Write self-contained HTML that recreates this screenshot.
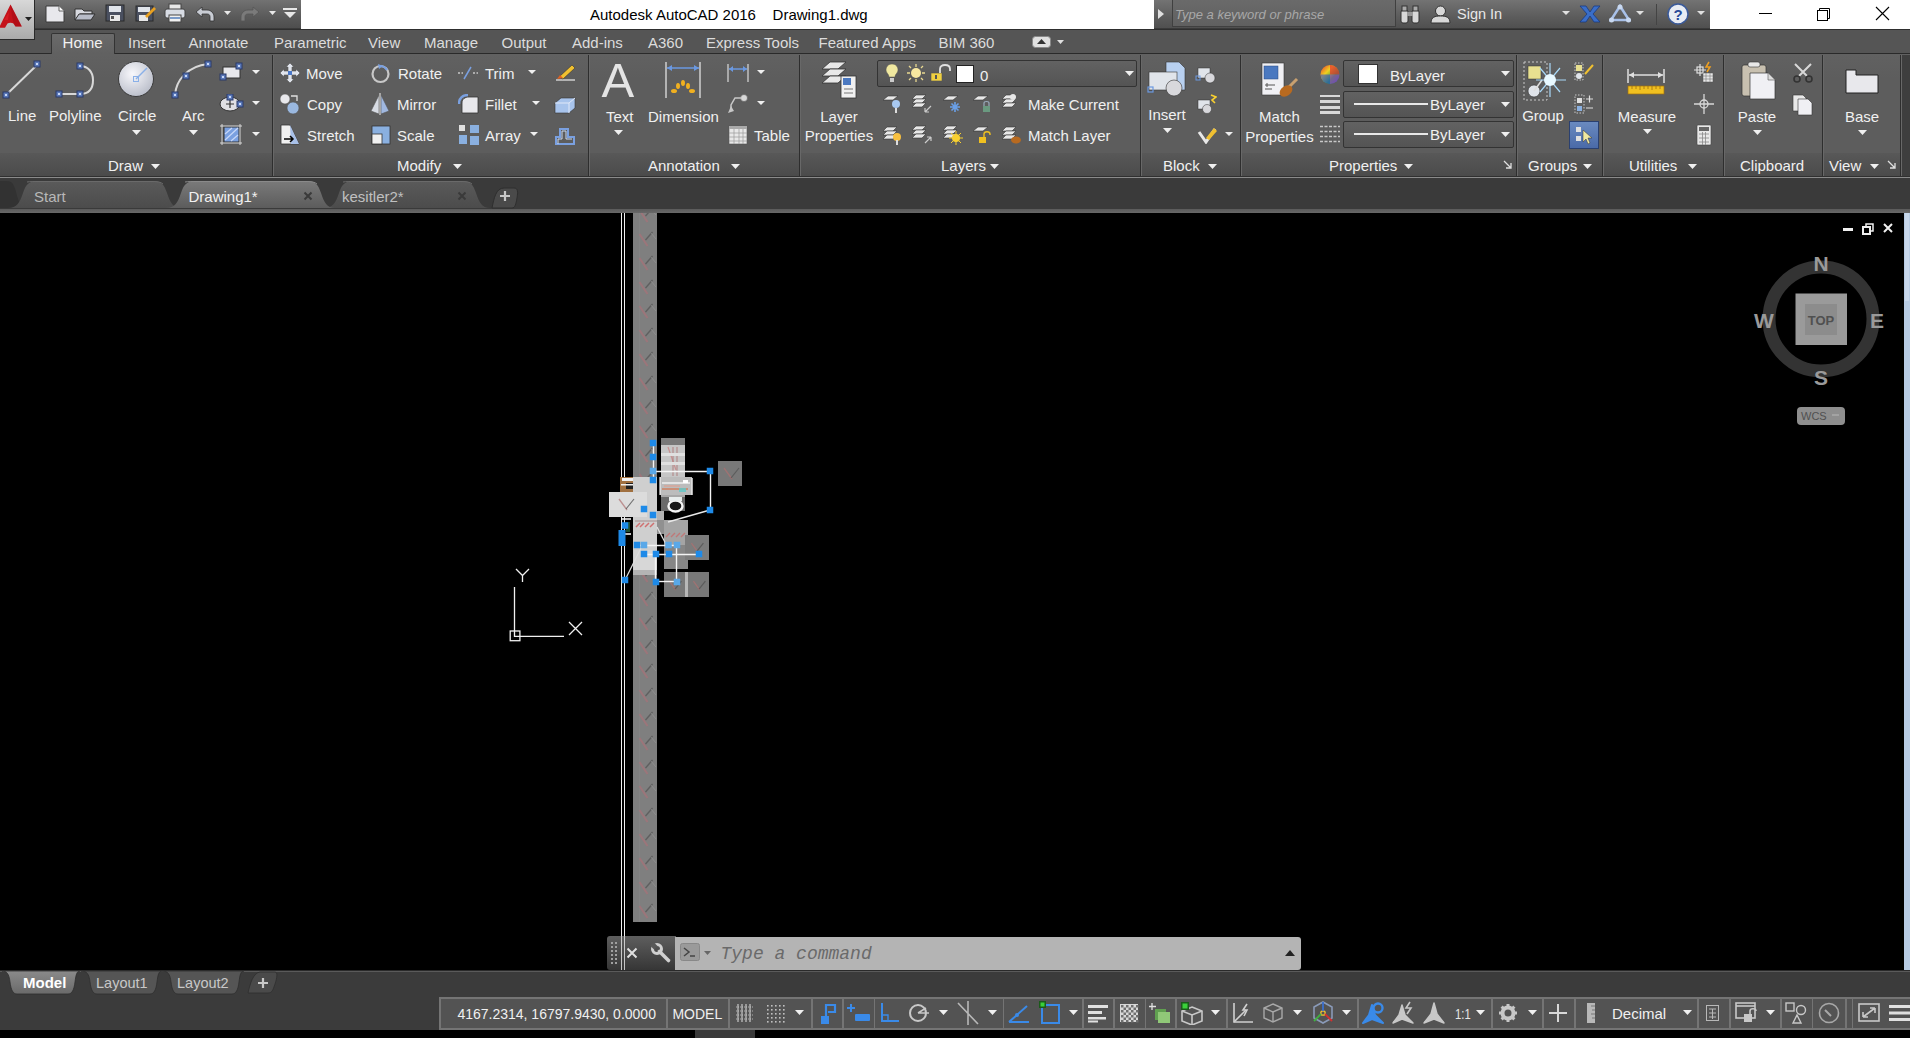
<!DOCTYPE html>
<html><head><meta charset="utf-8">
<style>
*{margin:0;padding:0;box-sizing:border-box}
html,body{width:1910px;height:1038px;overflow:hidden;background:#000;font-family:"Liberation Sans",sans-serif;position:relative}
.a{position:absolute;display:block}
.t{position:absolute;white-space:nowrap;line-height:1;font-family:"Liberation Sans",sans-serif}
</style></head><body>
<div class="a" style="left:0px;top:0px;width:1910px;height:29px;background:#ffffff"></div>
<div class="a" style="left:34px;top:0px;width:267px;height:29px;background:linear-gradient(#727272,#5a5a5a 60%,#4e4e4e);border-bottom:1px solid #3a3a3a"></div>
<svg class="a" style="left:45px;top:5px;" width="21" height="18" viewBox="0 0 21 18"><path d="M1 1H14L19 6V17H1Z" fill="#e8e8ec" stroke="#3a3a3a" stroke-width="1"/><path d="M14 1V6H19" fill="#fff" stroke="#666"/></svg>
<svg class="a" style="left:74px;top:6px;" width="22" height="15" viewBox="0 0 22 15"><path d="M1 3H8L10 5H18V8H6L1 14Z" fill="#d8dae0" stroke="#333"/><path d="M5 8H21L17 14H1Z" fill="#b8bcc8" stroke="#333"/></svg>
<svg class="a" style="left:105px;top:4px;" width="20" height="18" viewBox="0 0 20 18"><rect x="1" y="1" width="18" height="16" fill="#4a5060" stroke="#2a2a2a"/><rect x="4" y="2" width="12" height="6" fill="#e0e4ea"/><rect x="5" y="11" width="10" height="6" fill="#e8e8e8"/><rect x="6" y="12" width="3" height="3" fill="#555"/></svg>
<svg class="a" style="left:135px;top:4px;" width="22" height="18" viewBox="0 0 22 18"><rect x="1" y="2" width="17" height="15" fill="#4a5060" stroke="#2a2a2a"/><rect x="3" y="3" width="12" height="5" fill="#e0e4ea"/><rect x="4" y="11" width="9" height="6" fill="#e8e8e8"/><path d="M10 12L19 3L21 5L12 14Z" fill="#e8a020"/></svg>
<svg class="a" style="left:164px;top:3px;" width="22" height="20" viewBox="0 0 22 20"><rect x="5" y="1" width="12" height="6" fill="#e8e8e8" stroke="#444"/><rect x="1" y="6" width="20" height="9" rx="2" fill="#d8dce4" stroke="#444"/><rect x="5" y="12" width="12" height="7" fill="#f0f0f0" stroke="#444"/><rect x="6" y="14" width="10" height="2" fill="#7a9ac8"/></svg>
<svg class="a" style="left:195px;top:6px;" width="20" height="16" viewBox="0 0 20 16"><path d="M1 6L7 1V4H12C16 4 19 7 19 11V15H15V11C15 9 14 8 12 8H7V11Z" fill="#c8ccd4" stroke="#333" stroke-width=".8"/></svg>
<svg class="a" style="left:223.5px;top:11.0px;" width="7" height="4" viewBox="0 0 7 4"><path d="M0 0H7L3.5 4Z" fill="#e8e8e8"/></svg>
<svg class="a" style="left:240px;top:6px;" width="20" height="16" viewBox="0 0 20 16"><path d="M19 6L13 1V4H8C4 4 1 7 1 11V15H5V11C5 9 6 8 8 8H13V11Z" fill="#7a7a7a" stroke="#555" stroke-width=".8"/></svg>
<svg class="a" style="left:268.5px;top:11.0px;" width="7" height="4" viewBox="0 0 7 4"><path d="M0 0H7L3.5 4Z" fill="#e8e8e8"/></svg>
<svg class="a" style="left:283px;top:8px;" width="14" height="10" viewBox="0 0 14 10"><rect x="0" y="0" width="14" height="2" fill="#e8e8e8"/><path d="M1 4H13L7 10Z" fill="#e8e8e8"/></svg>
<div class="t" style="left:590px;top:7.3px;font-size:15px;color:#000000;">Autodesk AutoCAD 2016&nbsp;&nbsp;&nbsp;&nbsp;Drawing1.dwg</div>
<div class="a" style="left:1154px;top:0px;width:556px;height:29px;background:linear-gradient(#737373,#5c5c5c 60%,#505050);border-bottom:1px solid #3a3a3a"></div>
<svg class="a" style="left:1157px;top:8px;" width="8" height="12" viewBox="0 0 8 12"><path d="M1 1L7 6L1 11Z" fill="#e0e0e0"/></svg>
<div class="a" style="left:1172px;top:0px;width:224px;height:27px;background:linear-gradient(#6a6a6a,#606060);border:1px solid #404040;border-top:0"></div>
<div class="t" style="left:1175px;top:8.0px;font-size:13px;color:#a8a8a8;font-style:italic">Type a keyword or phrase</div>
<svg class="a" style="left:1400px;top:5px;" width="21" height="19" viewBox="0 0 21 19"><rect x="1" y="5" width="7" height="13" rx="2" fill="#d8d8d8" stroke="#333"/><rect x="12" y="5" width="7" height="13" rx="2" fill="#d8d8d8" stroke="#333"/><rect x="2" y="1" width="5" height="5" fill="#aaa" stroke="#333"/><rect x="13" y="1" width="5" height="5" fill="#aaa" stroke="#333"/><rect x="7" y="7" width="6" height="4" fill="#999"/></svg>
<svg class="a" style="left:1430px;top:4px;" width="21" height="20" viewBox="0 0 21 20"><circle cx="10.5" cy="7" r="5" fill="#d8d8d8" stroke="#333"/><path d="M1 19C1 13 5 12 10.5 12S20 13 20 19Z" fill="#d8d8d8" stroke="#333"/></svg>
<div class="t" style="left:1457px;top:7.1px;font-size:14.5px;color:#e8e8e8;">Sign In</div>
<svg class="a" style="left:1562.0px;top:11.0px;" width="8" height="4" viewBox="0 0 8 4"><path d="M0 0H8L4.0 4Z" fill="#e0e0e0"/></svg>
<svg class="a" style="left:1579px;top:5px;" width="22" height="18" viewBox="0 0 22 18"><path d="M1 1H7L11 7L15 1H21L14 9L21 17H15L11 11L7 17H1L8 9Z" fill="#3a6ec8" stroke="#1a3a80" stroke-width=".8"/></svg>
<svg class="a" style="left:1609px;top:4px;" width="22" height="19" viewBox="0 0 22 19"><path d="M11 2L20 16H2Z" fill="none" stroke="#a8c0e8" stroke-width="2.5"/><circle cx="11" cy="3" r="2.5" fill="#c8d8f0"/><circle cx="2.5" cy="16" r="2.5" fill="#c8d8f0"/><circle cx="19.5" cy="16" r="2.5" fill="#c8d8f0"/></svg>
<svg class="a" style="left:1636.0px;top:11.0px;" width="8" height="4" viewBox="0 0 8 4"><path d="M0 0H8L4.0 4Z" fill="#e0e0e0"/></svg>
<div class="a" style="left:1656px;top:4px;width:1px;height:21px;background:#444"></div>
<svg class="a" style="left:1667px;top:3px;" width="22" height="22" viewBox="0 0 22 22"><circle cx="11" cy="11" r="10" fill="#e8ecf4" stroke="#3a5a9a" stroke-width="1.5"/><text x="11" y="16.5" text-anchor="middle" font-family="Liberation Sans" font-weight="bold" font-size="15" fill="#2a4a9a">?</text></svg>
<svg class="a" style="left:1697.0px;top:11.0px;" width="8" height="4" viewBox="0 0 8 4"><path d="M0 0H8L4.0 4Z" fill="#e0e0e0"/></svg>
<div class="a" style="left:1759px;top:13px;width:13px;height:1px;background:#000"></div>
<svg class="a" style="left:1816px;top:7px;" width="15" height="15" viewBox="0 0 15 15"><rect x="1.5" y="3.5" width="10" height="10" fill="none" stroke="#000"/><path d="M3.5 3.5V1.5H13.5V11.5H11.5" fill="none" stroke="#000"/></svg>
<svg class="a" style="left:1875px;top:6px;" width="15" height="15" viewBox="0 0 15 15"><path d="M1 1L14 14M14 1L1 14" stroke="#000" stroke-width="1.1"/></svg>
<div class="a" style="left:0px;top:29px;width:1910px;height:25px;background:#555555;border-top:1px solid #2e2e2e;border-bottom:1px solid #2a2a2a"></div>
<div class="a" style="left:51px;top:33px;width:64px;height:22px;background:linear-gradient(#6a6a6a,#606060);border:1px solid #333;border-bottom:0;border-radius:2px 2px 0 0"></div>
<div class="a" style="left:34px;top:29px;width:0px;height:0px;"></div>
<div class="t" style="left:62.6px;top:34.7px;font-size:15px;color:#f2f2f2;">Home</div>
<div class="t" style="left:128px;top:34.7px;font-size:15px;color:#dcdcdc;">Insert</div>
<div class="t" style="left:188.4px;top:34.7px;font-size:15px;color:#dcdcdc;">Annotate</div>
<div class="t" style="left:274px;top:34.7px;font-size:15px;color:#dcdcdc;">Parametric</div>
<div class="t" style="left:368px;top:34.7px;font-size:15px;color:#dcdcdc;">View</div>
<div class="t" style="left:424px;top:34.7px;font-size:15px;color:#dcdcdc;">Manage</div>
<div class="t" style="left:501.5px;top:34.7px;font-size:15px;color:#dcdcdc;">Output</div>
<div class="t" style="left:572px;top:34.7px;font-size:15px;color:#dcdcdc;">Add-ins</div>
<div class="t" style="left:648px;top:34.7px;font-size:15px;color:#dcdcdc;">A360</div>
<div class="t" style="left:706px;top:34.7px;font-size:15px;color:#dcdcdc;">Express Tools</div>
<div class="t" style="left:818.5px;top:34.7px;font-size:15px;color:#dcdcdc;">Featured Apps</div>
<div class="t" style="left:938.6px;top:34.7px;font-size:15px;color:#dcdcdc;">BIM 360</div>
<svg class="a" style="left:1032px;top:36px;" width="19" height="12" viewBox="0 0 19 12"><rect x=".5" y=".5" width="18" height="11" rx="3" fill="#e0e0e0" stroke="#888"/><path d="M5 8H14L9.5 3Z" fill="#333"/></svg>
<svg class="a" style="left:1056.5px;top:40.0px;" width="7" height="4" viewBox="0 0 7 4"><path d="M0 0H7L3.5 4Z" fill="#e0e0e0"/></svg>
<div class="a" style="left:0px;top:0px;width:35px;height:40px;background:linear-gradient(#d8d8d8,#aaaaaa);border-right:1px solid #2a2a2a;border-bottom:1px solid #2a2a2a"></div>
<svg class="a" style="left:0px;top:4px;" width="24" height="26" viewBox="0 0 24 26"><path d="M10.5 0.5L21.8 22.5H15.5L13.5 19.5C12 18.5 9 18.5 7.5 19.5L5 23.8H-1Z" fill="#c4121a"/><path d="M10.5 0.5L21.8 22.5H15.5L13.5 19.5L12 12Z" fill="#a00c14" opacity=".45"/><path d="M4 16L9 8L8 16Z" fill="#f03038" opacity=".4"/></svg>
<svg class="a" style="left:25.0px;top:17.0px;" width="7" height="4" viewBox="0 0 7 4"><path d="M0 0H7L3.5 4Z" fill="#202020"/></svg>
<div class="a" style="left:0px;top:54px;width:1910px;height:123px;background:linear-gradient(#616161,#5d5d5d 20%,#5d5d5d)"></div>
<div class="a" style="left:0px;top:153px;width:1900px;height:23px;background:linear-gradient(#585858,#4b4b4b)"></div>
<div class="a" style="left:0px;top:176px;width:1910px;height:1px;background:#303030"></div>
<div class="a" style="left:0px;top:177px;width:1910px;height:1px;background:#8a8a8a"></div>
<div class="a" style="left:1900px;top:55px;width:10px;height:121px;background:#3e3e3e"></div>
<div class="a" style="left:272px;top:55px;width:1px;height:121px;background:#2e2e2e"></div>
<div class="a" style="left:273px;top:55px;width:1px;height:121px;background:#686868"></div>
<div class="a" style="left:588px;top:55px;width:1px;height:121px;background:#2e2e2e"></div>
<div class="a" style="left:589px;top:55px;width:1px;height:121px;background:#686868"></div>
<div class="a" style="left:799px;top:55px;width:1px;height:121px;background:#2e2e2e"></div>
<div class="a" style="left:800px;top:55px;width:1px;height:121px;background:#686868"></div>
<div class="a" style="left:1140px;top:55px;width:1px;height:121px;background:#2e2e2e"></div>
<div class="a" style="left:1141px;top:55px;width:1px;height:121px;background:#686868"></div>
<div class="a" style="left:1240px;top:55px;width:1px;height:121px;background:#2e2e2e"></div>
<div class="a" style="left:1241px;top:55px;width:1px;height:121px;background:#686868"></div>
<div class="a" style="left:1516px;top:55px;width:1px;height:121px;background:#2e2e2e"></div>
<div class="a" style="left:1517px;top:55px;width:1px;height:121px;background:#686868"></div>
<div class="a" style="left:1602px;top:55px;width:1px;height:121px;background:#2e2e2e"></div>
<div class="a" style="left:1603px;top:55px;width:1px;height:121px;background:#686868"></div>
<div class="a" style="left:1723px;top:55px;width:1px;height:121px;background:#2e2e2e"></div>
<div class="a" style="left:1724px;top:55px;width:1px;height:121px;background:#686868"></div>
<div class="a" style="left:1822px;top:55px;width:1px;height:121px;background:#2e2e2e"></div>
<div class="a" style="left:1823px;top:55px;width:1px;height:121px;background:#686868"></div>
<div class="a" style="left:1900px;top:55px;width:1px;height:121px;background:#2e2e2e"></div>
<div class="a" style="left:1901px;top:55px;width:1px;height:121px;background:#686868"></div>
<div class="t" style="left:108px;top:158.1px;font-size:15px;color:#f0f0f0;">Draw</div>
<svg class="a" style="left:150.5px;top:163.5px;" width="9" height="5" viewBox="0 0 9 5"><path d="M0 0H9L4.5 5Z" fill="#f0f0f0"/></svg>
<div class="t" style="left:397px;top:158.1px;font-size:15px;color:#f0f0f0;">Modify</div>
<svg class="a" style="left:452.5px;top:163.5px;" width="9" height="5" viewBox="0 0 9 5"><path d="M0 0H9L4.5 5Z" fill="#f0f0f0"/></svg>
<div class="t" style="left:648px;top:158.1px;font-size:15px;color:#f0f0f0;">Annotation</div>
<svg class="a" style="left:730.5px;top:163.5px;" width="9" height="5" viewBox="0 0 9 5"><path d="M0 0H9L4.5 5Z" fill="#f0f0f0"/></svg>
<div class="t" style="left:941px;top:158.1px;font-size:15px;color:#f0f0f0;">Layers</div>
<svg class="a" style="left:989.5px;top:163.5px;" width="9" height="5" viewBox="0 0 9 5"><path d="M0 0H9L4.5 5Z" fill="#f0f0f0"/></svg>
<div class="t" style="left:1163px;top:158.1px;font-size:15px;color:#f0f0f0;">Block</div>
<svg class="a" style="left:1207.5px;top:163.5px;" width="9" height="5" viewBox="0 0 9 5"><path d="M0 0H9L4.5 5Z" fill="#f0f0f0"/></svg>
<div class="t" style="left:1329px;top:158.1px;font-size:15px;color:#f0f0f0;">Properties</div>
<svg class="a" style="left:1403.5px;top:163.5px;" width="9" height="5" viewBox="0 0 9 5"><path d="M0 0H9L4.5 5Z" fill="#f0f0f0"/></svg>
<svg class="a" style="left:1503px;top:160px;" width="10" height="10" viewBox="0 0 10 10"><path d="M1 1L8 8M8 3V8H3" stroke="#e0e0e0" stroke-width="1.3" fill="none"/></svg>
<div class="t" style="left:1528px;top:158.1px;font-size:15px;color:#f0f0f0;">Groups</div>
<svg class="a" style="left:1582.5px;top:163.5px;" width="9" height="5" viewBox="0 0 9 5"><path d="M0 0H9L4.5 5Z" fill="#f0f0f0"/></svg>
<div class="t" style="left:1629px;top:158.1px;font-size:15px;color:#f0f0f0;">Utilities</div>
<svg class="a" style="left:1687.5px;top:163.5px;" width="9" height="5" viewBox="0 0 9 5"><path d="M0 0H9L4.5 5Z" fill="#f0f0f0"/></svg>
<div class="t" style="left:1740px;top:158.1px;font-size:15px;color:#f0f0f0;">Clipboard</div>
<div class="t" style="left:1829px;top:158.1px;font-size:15px;color:#f0f0f0;">View</div>
<svg class="a" style="left:1869.5px;top:163.5px;" width="9" height="5" viewBox="0 0 9 5"><path d="M0 0H9L4.5 5Z" fill="#f0f0f0"/></svg>
<svg class="a" style="left:1887px;top:160px;" width="10" height="10" viewBox="0 0 10 10"><path d="M1 1L8 8M8 3V8H3" stroke="#e0e0e0" stroke-width="1.3" fill="none"/></svg>
<svg class="a" style="left:0px;top:58px;" width="44" height="42" viewBox="0 0 44 42"><path d="M6 37L38 6" stroke="#d8d8d8" stroke-width="2"/><rect x="3" y="34" width="6" height="6" fill="#5a78b8" stroke="#2a3a6a" stroke-width="1"/><rect x="5" y="36" width="2" height="2" fill="#c8d8f8"/><rect x="34" y="3" width="6" height="6" fill="#5a78b8" stroke="#2a3a6a" stroke-width="1"/><rect x="36" y="5" width="2" height="2" fill="#c8d8f8"/></svg>
<div class="t" style="left:8px;top:108.3px;font-size:15px;color:#f0f0f0;">Line</div>
<svg class="a" style="left:52px;top:62px;" width="46" height="36" viewBox="0 0 46 36"><path d="M7 32H28C38 32 41 26 41 18C41 10 36 4 28 4" fill="none" stroke="#d8d8d8" stroke-width="2"/><rect x="4" y="29" width="6" height="6" fill="#5a78b8" stroke="#2a3a6a" stroke-width="1"/><rect x="6" y="31" width="2" height="2" fill="#c8d8f8"/><rect x="25" y="29" width="6" height="6" fill="#5a78b8" stroke="#2a3a6a" stroke-width="1"/><rect x="27" y="31" width="2" height="2" fill="#c8d8f8"/><rect x="25" y="1" width="6" height="6" fill="#5a78b8" stroke="#2a3a6a" stroke-width="1"/><rect x="27" y="3" width="2" height="2" fill="#c8d8f8"/></svg>
<div class="t" style="left:49px;top:108.3px;font-size:15px;color:#f0f0f0;">Polyline</div>
<svg class="a" style="left:116px;top:60px;" width="40" height="40" viewBox="0 0 40 40"><defs><radialGradient id="cg" cx="40%" cy="35%" r="70%"><stop offset="0" stop-color="#f8f8fc"/><stop offset="1" stop-color="#b8bcc8"/></radialGradient></defs><circle cx="20" cy="19" r="17.5" fill="url(#cg)" stroke="#3a3a3a" stroke-width="1"/><path d="M20 19L31 8" stroke="#8ab0e8" stroke-width="1.5"/><rect x="17.5" y="16.5" width="5" height="5" fill="none" stroke="#8ab0e8"/></svg>
<div class="t" style="left:118px;top:108.3px;font-size:15px;color:#f0f0f0;">Circle</div>
<svg class="a" style="left:131.5px;top:129.5px;" width="9" height="5" viewBox="0 0 9 5"><path d="M0 0H9L4.5 5Z" fill="#f0f0f0"/></svg>
<svg class="a" style="left:170px;top:60px;" width="44" height="40" viewBox="0 0 44 40"><path d="M5 35C6 20 18 6 38 4" fill="none" stroke="#d8d8d8" stroke-width="2"/><rect x="2" y="32" width="6" height="6" fill="#5a78b8" stroke="#2a3a6a" stroke-width="1"/><rect x="4" y="34" width="2" height="2" fill="#c8d8f8"/><rect x="13" y="13" width="6" height="6" fill="#5a78b8" stroke="#2a3a6a" stroke-width="1"/><rect x="15" y="15" width="2" height="2" fill="#c8d8f8"/><rect x="35" y="1" width="6" height="6" fill="#5a78b8" stroke="#2a3a6a" stroke-width="1"/><rect x="37" y="3" width="2" height="2" fill="#c8d8f8"/></svg>
<div class="t" style="left:182px;top:108.3px;font-size:15px;color:#f0f0f0;">Arc</div>
<svg class="a" style="left:188.5px;top:129.5px;" width="9" height="5" viewBox="0 0 9 5"><path d="M0 0H9L4.5 5Z" fill="#f0f0f0"/></svg>
<svg class="a" style="left:218px;top:62px;" width="26" height="20" viewBox="0 0 26 20"><rect x="5" y="5" width="17" height="11" fill="#e8e8ec" stroke="#333"/><rect x="2" y="12" width="6" height="6" fill="#5a78b8" stroke="#2a3a6a" stroke-width="1"/><rect x="4" y="14" width="2" height="2" fill="#c8d8f8"/><rect x="18" y="1" width="6" height="6" fill="#5a78b8" stroke="#2a3a6a" stroke-width="1"/><rect x="20" y="3" width="2" height="2" fill="#c8d8f8"/></svg>
<svg class="a" style="left:252.0px;top:70.0px;" width="8" height="4" viewBox="0 0 8 4"><path d="M0 0H8L4.0 4Z" fill="#f0f0f0"/></svg>
<svg class="a" style="left:219px;top:94px;" width="26" height="20" viewBox="0 0 26 20"><ellipse cx="11" cy="10" rx="10" ry="7" fill="#e0e0e4" stroke="#333"/><path d="M11 6V14M7 10H15" stroke="#333" stroke-width="1.2"/><rect x="8" y="0" width="6" height="6" fill="#5a78b8" stroke="#2a3a6a" stroke-width="1"/><rect x="10" y="2" width="2" height="2" fill="#c8d8f8"/><rect x="18" y="7" width="6" height="6" fill="#5a78b8" stroke="#2a3a6a" stroke-width="1"/><rect x="20" y="9" width="2" height="2" fill="#c8d8f8"/></svg>
<svg class="a" style="left:252.0px;top:101.0px;" width="8" height="4" viewBox="0 0 8 4"><path d="M0 0H8L4.0 4Z" fill="#f0f0f0"/></svg>
<svg class="a" style="left:219px;top:123px;" width="24" height="22" viewBox="0 0 24 22"><rect x="5" y="4" width="15" height="15" fill="#7aa0e0" stroke="#333"/><path d="M6 17L19 5M6 11L13 5M12 18L19 12" stroke="#c8d8f8" stroke-width="1.2"/><path d="M1 3H23M1 20H23M3 1V22M21 1V22" stroke="#d8d8d8" stroke-width="1"/></svg>
<svg class="a" style="left:252.0px;top:132.0px;" width="8" height="4" viewBox="0 0 8 4"><path d="M0 0H8L4.0 4Z" fill="#f0f0f0"/></svg>
<svg class="a" style="left:279px;top:62px;" width="22" height="22" viewBox="0 0 22 22"><path d="M11 1L15 5H13V9H17V7L21 11L17 15V13H13V17H15L11 21L7 17H9V13H5V15L1 11L5 7V9H9V5H7Z" fill="#e0e4ec" stroke="#555" stroke-width=".6"/><rect x="9" y="9" width="4" height="4" fill="#4a78c8"/></svg>
<div class="t" style="left:306px;top:66.3px;font-size:15px;color:#f0f0f0;">Move</div>
<svg class="a" style="left:279px;top:93px;" width="24" height="22" viewBox="0 0 24 22"><circle cx="6" cy="6" r="5" fill="#e8e8ec" stroke="#555" stroke-width=".6"/><circle cx="14" cy="15" r="6" fill="#9ab8e0" stroke="#555" stroke-width=".6"/><path d="M12 3H18V8" fill="none" stroke="#e0e0e0" stroke-width="1.3"/></svg>
<div class="t" style="left:307px;top:97.3px;font-size:15px;color:#f0f0f0;">Copy</div>
<svg class="a" style="left:280px;top:124px;" width="22" height="22" viewBox="0 0 22 22"><path d="M1 1H10L19 20H1Z" fill="#f0f0f0" stroke="#333" stroke-width=".8"/><path d="M10 1L19 20H11Z" fill="#a8c0e8"/><path d="M4 15H12M10 12L13 15L10 18" stroke="#000" stroke-width="1.5" fill="none"/></svg>
<div class="t" style="left:307px;top:128.3px;font-size:15px;color:#f0f0f0;">Stretch</div>
<svg class="a" style="left:370px;top:63px;" width="21" height="21" viewBox="0 0 21 21"><circle cx="10.5" cy="11" r="8" fill="none" stroke="#c8c8c8" stroke-width="2.2"/><path d="M8 1L13 3L9 6Z" fill="#7aa0e0"/><path d="M10 3A8 8 0 0 1 17 7" stroke="#7aa0e0" stroke-width="2.2" fill="none"/></svg>
<div class="t" style="left:398px;top:66.3px;font-size:15px;color:#f0f0f0;">Rotate</div>
<svg class="a" style="left:370px;top:93px;" width="20" height="22" viewBox="0 0 20 22"><path d="M9 2V21L1 18Z" fill="#d8dce4" stroke="#555" stroke-width=".6"/><path d="M11 2V21L19 18Z" fill="#a0b8e0" stroke="#555" stroke-width=".6"/><path d="M10 0V22" stroke="#f0f0f0"/></svg>
<div class="t" style="left:397px;top:97.3px;font-size:15px;color:#f0f0f0;">Mirror</div>
<svg class="a" style="left:371px;top:125px;" width="20" height="20" viewBox="0 0 20 20"><rect x="1" y="1" width="18" height="18" fill="#8ab0e0" stroke="#333" stroke-width=".8"/><rect x="1" y="9" width="10" height="10" fill="#f0f0f0" stroke="#333" stroke-width=".8"/></svg>
<div class="t" style="left:397px;top:128.3px;font-size:15px;color:#f0f0f0;">Scale</div>
<svg class="a" style="left:457px;top:66px;" width="22" height="14" viewBox="0 0 22 14"><path d="M1 7H6M16 7H21" stroke="#c8c8c8" stroke-width="1.3" stroke-dasharray="2 1.5"/><path d="M7 13L14 1" stroke="#7aa0e0" stroke-width="1.5"/></svg>
<div class="t" style="left:485px;top:66.3px;font-size:15px;color:#f0f0f0;">Trim</div>
<svg class="a" style="left:528.0px;top:70.0px;" width="8" height="4" viewBox="0 0 8 4"><path d="M0 0H8L4.0 4Z" fill="#f0f0f0"/></svg>
<svg class="a" style="left:458px;top:94px;" width="22" height="20" viewBox="0 0 22 20"><path d="M4 19V9C4 5 7 3 11 3H20V19Z" fill="#e8e8ec" stroke="#333" stroke-width=".8"/><path d="M1 10C1 4 5 1 10 1" stroke="#7aa0e0" stroke-width="2.5" fill="none"/></svg>
<div class="t" style="left:485px;top:97.3px;font-size:15px;color:#f0f0f0;">Fillet</div>
<svg class="a" style="left:532.0px;top:101.0px;" width="8" height="4" viewBox="0 0 8 4"><path d="M0 0H8L4.0 4Z" fill="#f0f0f0"/></svg>
<svg class="a" style="left:458px;top:124px;" width="22" height="22" viewBox="0 0 22 22"><rect x="1" y="1" width="6" height="6" fill="#e0e0e0"/><rect x="12" y="1" width="9" height="8" fill="#8ab0e0"/><rect x="1" y="11" width="8" height="9" fill="#8ab0e0"/><rect x="12" y="12" width="9" height="9" fill="#8ab0e0"/></svg>
<div class="t" style="left:485px;top:128.3px;font-size:15px;color:#f0f0f0;">Array</div>
<svg class="a" style="left:530.0px;top:132.0px;" width="8" height="4" viewBox="0 0 8 4"><path d="M0 0H8L4.0 4Z" fill="#f0f0f0"/></svg>
<svg class="a" style="left:553px;top:62px;" width="24" height="20" viewBox="0 0 24 20"><path d="M3 18H22" stroke="#e0e0e0" stroke-width="1.3"/><path d="M6 15L19 3L22 6L10 17Z" fill="#f0c030" stroke="#333" stroke-width=".6"/><path d="M4 17L7 13L10 16Z" fill="#e06020"/></svg>
<svg class="a" style="left:553px;top:94px;" width="24" height="20" viewBox="0 0 24 20"><path d="M2 9L8 4H22V14L16 19H2Z" fill="#a8c4ec" stroke="#333" stroke-width=".6"/><path d="M2 9H16V19M16 9L22 4" stroke="#e0e8f8" stroke-width="1" fill="none"/></svg>
<svg class="a" style="left:553px;top:125px;" width="24" height="22" viewBox="0 0 24 22"><path d="M3 19V12H7V4H15V12H21V19Z" fill="none" stroke="#7aa0e0" stroke-width="2"/><path d="M5 19V14H9V6H13V14H19" fill="none" stroke="#c8d8f0" stroke-width="1"/></svg>
<div class="t" style="left:601.5px;top:56.3px;font-size:49px;color:#e4e4e4;">A</div>
<svg class="a" style="left:664px;top:61px;" width="38" height="38" viewBox="0 0 38 38"><path d="M2 1V37M36 1V37" stroke="#d0d0d0" stroke-width="1.5"/><path d="M3 7H35" stroke="#6a98e0" stroke-width="1.5"/><path d="M3 7L8 4V10ZM35 7L30 4V10Z" fill="#6a98e0"/><g fill="#f0b020"><ellipse cx="10" cy="30" rx="3" ry="2"/><ellipse cx="14" cy="25" rx="2" ry="3"/><ellipse cx="19" cy="22" rx="2" ry="3"/><ellipse cx="24" cy="25" rx="2" ry="3"/><ellipse cx="28" cy="30" rx="3" ry="2"/></g></svg>
<div class="t" style="left:648px;top:109.0px;font-size:15px;color:#f0f0f0;">Dimension</div>
<div class="t" style="left:606px;top:109.0px;font-size:15px;color:#f0f0f0;">Text</div>
<svg class="a" style="left:613.5px;top:129.5px;" width="9" height="5" viewBox="0 0 9 5"><path d="M0 0H9L4.5 5Z" fill="#f0f0f0"/></svg>
<svg class="a" style="left:727px;top:63px;" width="22" height="20" viewBox="0 0 22 20"><path d="M1 1V19M21 1V19" stroke="#d0d0d0" stroke-width="1.3"/><path d="M2 6H20" stroke="#6a98e0" stroke-width="1.5"/><path d="M2 6L6 3V9ZM20 6L16 3V9Z" fill="#6a98e0"/></svg>
<svg class="a" style="left:757.0px;top:70.0px;" width="8" height="4" viewBox="0 0 8 4"><path d="M0 0H8L4.0 4Z" fill="#f0f0f0"/></svg>
<svg class="a" style="left:727px;top:93px;" width="24" height="21" viewBox="0 0 24 21"><circle cx="17" cy="5" r="3.5" fill="#d8d8d8" stroke="#555" stroke-width=".6"/><path d="M14 5H8L4 12V18" stroke="#c8c8c8" stroke-width="1.5" fill="none"/><path d="M1 20L4 13L7 18Z" fill="#c8c8c8"/></svg>
<svg class="a" style="left:757.0px;top:101.0px;" width="8" height="4" viewBox="0 0 8 4"><path d="M0 0H8L4.0 4Z" fill="#f0f0f0"/></svg>
<svg class="a" style="left:728px;top:125px;" width="20" height="20" viewBox="0 0 20 20"><rect x="1" y="1" width="18" height="18" fill="#e8e8e8" stroke="#555" stroke-width=".6"/><rect x="1" y="1" width="18" height="3" fill="#aaa"/><path d="M1 8H19M1 12H19M1 16H19M6 4V19M11 4V19M15 4V19" stroke="#999" stroke-width=".7"/></svg>
<div class="t" style="left:754px;top:128.3px;font-size:15px;color:#f0f0f0;">Table</div>
<svg class="a" style="left:819px;top:60px;" width="40" height="40" viewBox="0 0 40 40"><path d="M3 9L11 2H27L19 9Z" fill="#e8e8e8" stroke="#333" stroke-width=".8"/><path d="M3 16L11 9H27L19 16Z" fill="#e8e8e8" stroke="#333" stroke-width=".8"/><path d="M3 23L11 16H27L19 23Z" fill="#e8e8e8" stroke="#333" stroke-width=".8"/><rect x="22" y="16" width="15" height="22" fill="#f0f0f0" stroke="#333" stroke-width=".8"/><rect x="24" y="18" width="8" height="7" fill="#4a78c0"/><path d="M25 29H34M25 33H34" stroke="#777"/></svg>
<div class="t" style="left:639px;width:400px;text-align:center;top:109.0px;font-size:15px;color:#f0f0f0;">Layer</div>
<div class="t" style="left:639px;width:400px;text-align:center;top:128.3px;font-size:15px;color:#f0f0f0;">Properties</div>
<div class="a" style="left:877px;top:60px;width:260px;height:27px;background:linear-gradient(#626262,#545454);border:1px solid #333;border-radius:2px"></div>
<svg class="a" style="left:885px;top:63px;" width="14" height="20" viewBox="0 0 14 20"><path d="M7 1C3 1 1 4 1 7C1 10 4 11 4 14H10C10 11 13 10 13 7C13 4 11 1 7 1Z" fill="#f0e8a0" stroke="#555" stroke-width=".5"/><rect x="5" y="15" width="4" height="4" fill="#ccc"/></svg>
<svg class="a" style="left:905px;top:63px;" width="22" height="20" viewBox="0 0 22 20"><circle cx="11" cy="10" r="5" fill="#f8e8a0"/><path d="M11 1V4M11 16V19M2 10H5M17 10H20M4 3L6 5M16 15L18 17M18 3L16 5M6 15L4 17" stroke="#e8d890" stroke-width="1.3"/></svg>
<svg class="a" style="left:930px;top:64px;" width="22" height="18" viewBox="0 0 22 18"><rect x="1" y="9" width="11" height="8" fill="#f0d040" stroke="#555" stroke-width=".6"/><path d="M10 9V5C10 2 12 1 15 1S20 2 20 5V7" stroke="#e0e0e0" stroke-width="1.8" fill="none"/><rect x="5" y="11" width="2" height="4" fill="#555"/></svg>
<div class="a" style="left:956px;top:65px;width:18px;height:18px;background:#fff;border:1px solid #222"></div>
<div class="t" style="left:980px;top:67.8px;font-size:15px;color:#f0f0f0;">0</div>
<svg class="a" style="left:1124.5px;top:70.5px;" width="9" height="5" viewBox="0 0 9 5"><path d="M0 0H9L4.5 5Z" fill="#f0f0f0"/></svg>
<svg class="a" style="left:882px;top:94px;" width="20" height="20" viewBox="0 0 20 20"><path d="M1 6L6 2H16L11 6Z" fill="#e8e8e8" stroke="#333" stroke-width=".6"/><circle cx="14" cy="10" r="4" fill="#a8c8f0"/><rect x="13" y="14" width="2" height="5" fill="#ddd"/></svg>
<svg class="a" style="left:911px;top:94px;" width="22" height="20" viewBox="0 0 22 20"><path d="M1 5L5 1H15L11 5Z" fill="#e8e8e8" stroke="#333" stroke-width=".6"/><path d="M1 9L5 5H15L11 9Z" fill="#e8e8e8" stroke="#333" stroke-width=".6"/><path d="M1 13L5 9H15L11 13Z" fill="#e8e8e8" stroke="#333" stroke-width=".6"/><path d="M14 18L20 12M14 18V14M14 18H18" stroke="#ccc" stroke-width="1.2"/></svg>
<svg class="a" style="left:942px;top:94px;" width="22" height="20" viewBox="0 0 22 20"><path d="M1 6L6 2H16L11 6Z" fill="#e8e8e8" stroke="#333" stroke-width=".6"/><path d="M13 8V18M8 13H18M9.5 9.5L16.5 16.5M16.5 9.5L9.5 16.5" stroke="#6aa0e8" stroke-width="1.6"/></svg>
<svg class="a" style="left:972px;top:94px;" width="22" height="20" viewBox="0 0 22 20"><path d="M1 6L6 2H16L11 6Z" fill="#e8e8e8" stroke="#333" stroke-width=".6"/><rect x="11" y="12" width="7" height="6" fill="#6a9a80"/><path d="M12 12V9C12 7 17 7 17 9V12" stroke="#9ab" stroke-width="1.2" fill="none"/></svg>
<svg class="a" style="left:1001px;top:93px;" width="22" height="20" viewBox="0 0 22 20"><path d="M1 6L5 2H15L11 6Z" fill="#e8e8e8" stroke="#333" stroke-width=".6"/><path d="M1 10L5 6H15L11 10Z" fill="#e8e8e8" stroke="#333" stroke-width=".6"/><path d="M1 14L5 10H15L11 14Z" fill="#e8e8e8" stroke="#333" stroke-width=".6"/><circle cx="12" cy="4" r="3" fill="#e8e8e8"/></svg>
<div class="t" style="left:1028px;top:97.3px;font-size:15px;color:#f0f0f0;">Make Current</div>
<svg class="a" style="left:882px;top:125px;" width="20" height="20" viewBox="0 0 20 20"><path d="M1 6L5 2H15L11 6Z" fill="#e8e8e8" stroke="#333" stroke-width=".6"/><path d="M1 10L5 6H15L11 10Z" fill="#e8e8e8" stroke="#333" stroke-width=".6"/><path d="M1 14L5 10H15L11 14Z" fill="#e8e8e8" stroke="#333" stroke-width=".6"/><circle cx="15" cy="12" r="4" fill="#f8c040"/><rect x="14" y="15" width="2" height="5" fill="#ddd"/></svg>
<svg class="a" style="left:911px;top:125px;" width="22" height="20" viewBox="0 0 22 20"><path d="M1 5L5 1H15L11 5Z" fill="#e8e8e8" stroke="#333" stroke-width=".6"/><path d="M1 9L5 5H15L11 9Z" fill="#e8e8e8" stroke="#333" stroke-width=".6"/><path d="M1 13L5 9H15L11 13Z" fill="#e8e8e8" stroke="#333" stroke-width=".6"/><path d="M14 18L20 12M20 12V16M20 12H16" stroke="#ccc" stroke-width="1.2"/></svg>
<svg class="a" style="left:942px;top:125px;" width="22" height="20" viewBox="0 0 22 20"><path d="M1 5L5 1H15L11 5Z" fill="#e8e8e8" stroke="#333" stroke-width=".6"/><path d="M1 9L5 5H15L11 9Z" fill="#e8e8e8" stroke="#333" stroke-width=".6"/><path d="M1 13L5 9H15L11 13Z" fill="#e8e8e8" stroke="#333" stroke-width=".6"/><circle cx="14" cy="13" r="4" fill="#f8d030"/><path d="M14 6V20M7 13H21M9 8L19 18M19 8L9 18" stroke="#f8d030" stroke-width="1"/></svg>
<svg class="a" style="left:972px;top:125px;" width="22" height="20" viewBox="0 0 22 20"><path d="M1 6L6 2H16L11 6Z" fill="#e8e8e8" stroke="#333" stroke-width=".6"/><rect x="7" y="12" width="7" height="6" fill="#f0c020"/><path d="M12 12V9C12 6 18 6 18 9V10" stroke="#f0c020" stroke-width="1.4" fill="none"/></svg>
<svg class="a" style="left:1001px;top:125px;" width="22" height="20" viewBox="0 0 22 20"><path d="M1 6L5 2H15L11 6Z" fill="#e8e8e8" stroke="#333" stroke-width=".6"/><path d="M1 10L5 6H15L11 10Z" fill="#e8e8e8" stroke="#333" stroke-width=".6"/><path d="M1 14L5 10H15L11 14Z" fill="#e8e8e8" stroke="#333" stroke-width=".6"/><ellipse cx="15" cy="15" rx="5" ry="3.5" fill="#b86a20"/></svg>
<div class="t" style="left:1028px;top:128.3px;font-size:15px;color:#f0f0f0;">Match Layer</div>
<svg class="a" style="left:1146px;top:60px;" width="42" height="38" viewBox="0 0 42 38"><path d="M20 2H33L39 8V30H20Z" fill="#b8d0f0" stroke="#333" stroke-width=".6"/><rect x="3" y="12" width="28" height="18" fill="#e0e4ea" stroke="#333" stroke-width=".6"/><circle cx="28" cy="28" r="8" fill="#d8d8dc" stroke="#333" stroke-width=".6"/><rect x="2" y="27" width="5" height="5" fill="none" stroke="#6a98e0" stroke-width="1.2"/></svg>
<div class="t" style="left:967px;width:400px;text-align:center;top:107.3px;font-size:15px;color:#f0f0f0;">Insert</div>
<svg class="a" style="left:1162.5px;top:127.5px;" width="9" height="5" viewBox="0 0 9 5"><path d="M0 0H9L4.5 5Z" fill="#f0f0f0"/></svg>
<svg class="a" style="left:1195px;top:66px;" width="22" height="18" viewBox="0 0 22 18"><rect x="3" y="2" width="12" height="10" fill="#e0e4ea" stroke="#333" stroke-width=".5"/><circle cx="15" cy="12" r="5" fill="#d8d8dc" stroke="#333" stroke-width=".5"/><rect x="1" y="10" width="4" height="4" fill="none" stroke="#6a98e0"/></svg>
<svg class="a" style="left:1195px;top:94px;" width="22" height="20" viewBox="0 0 22 20"><rect x="3" y="6" width="12" height="9" fill="#e0e4ea" stroke="#333" stroke-width=".5"/><circle cx="12" cy="15" r="4.5" fill="#d8d8dc" stroke="#333" stroke-width=".5"/><path d="M16 1L21 3L17 6L20 9" stroke="#f8d030" stroke-width="1.6" fill="none"/></svg>
<svg class="a" style="left:1196px;top:124px;" width="22" height="20" viewBox="0 0 22 20"><path d="M3 8L10 18L19 5" stroke="#e8e8e8" stroke-width="3" fill="none"/><path d="M10 14L18 4L21 7L13 16Z" fill="#f0c030"/></svg>
<svg class="a" style="left:1225.0px;top:132.0px;" width="8" height="4" viewBox="0 0 8 4"><path d="M0 0H8L4.0 4Z" fill="#f0f0f0"/></svg>
<svg class="a" style="left:1259px;top:61px;" width="42" height="40" viewBox="0 0 42 40"><rect x="3" y="2" width="22" height="32" fill="#f0f0f4" stroke="#333" stroke-width=".6"/><rect x="5" y="5" width="14" height="13" fill="#4a78c0" stroke="#2a4a80" stroke-width=".5"/><path d="M6 24H16M6 28H13M8 22V26" stroke="#555" stroke-width="1"/><path d="M38 18L28 28" stroke="#c8a070" stroke-width="3"/><ellipse cx="27" cy="30" rx="7" ry="5" fill="#b86a20" transform="rotate(-35 27 30)"/></svg>
<div class="t" style="left:1079.5px;width:400px;text-align:center;top:109.1px;font-size:15px;color:#f0f0f0;">Match</div>
<div class="t" style="left:1079.5px;width:400px;text-align:center;top:128.8px;font-size:15px;color:#f0f0f0;">Properties</div>
<svg class="a" style="left:1319px;top:64px;" width="22" height="21" viewBox="0 0 22 21"><defs><linearGradient id="cw" x1="0" y1="0" x2="1" y2="1"><stop offset="0" stop-color="#e83030"/><stop offset=".35" stop-color="#f0d020"/><stop offset=".65" stop-color="#30a040"/><stop offset="1" stop-color="#3040d0"/></linearGradient></defs><circle cx="11" cy="10.5" r="9.5" fill="url(#cw)"/><path d="M11 1A9.5 9.5 0 0 1 20.5 10.5H11Z" fill="#e83030" opacity=".7"/><path d="M1.5 10.5A9.5 9.5 0 0 0 11 20H11V10.5Z" fill="#3050d0" opacity=".6"/><path d="M11 10.5H20.5A9.5 9.5 0 0 1 11 20Z" fill="#a040c0" opacity=".6"/></svg>
<svg class="a" style="left:1320px;top:94px;" width="20" height="20" viewBox="0 0 20 20"><rect x="0" y="1" width="20" height="2" fill="#d8d8d8"/><rect x="0" y="6" width="20" height="3" fill="#d8d8d8"/><rect x="0" y="12" width="20" height="3" fill="#d8d8d8"/><rect x="0" y="17" width="20" height="3" fill="#d8d8d8"/></svg>
<svg class="a" style="left:1320px;top:125px;" width="20" height="18" viewBox="0 0 20 18"><path d="M0 1.5H20M0 6.5H20M0 11.5H20M0 16.5H20" stroke="#c8c8c8" stroke-width="1.5" stroke-dasharray="3 1.5"/></svg>
<div class="a" style="left:1343px;top:60px;width:171px;height:27px;background:linear-gradient(#626262,#545454);border:1px solid #333;border-radius:2px"></div>
<div class="a" style="left:1343px;top:90.5px;width:171px;height:27px;background:linear-gradient(#626262,#545454);border:1px solid #333;border-radius:2px"></div>
<div class="a" style="left:1343px;top:120.5px;width:171px;height:27px;background:linear-gradient(#626262,#545454);border:1px solid #333;border-radius:2px"></div>
<div class="a" style="left:1358px;top:64px;width:20px;height:20px;background:#fff;border:1px solid #333"></div>
<div class="t" style="left:1390px;top:67.5px;font-size:15px;color:#f0f0f0;">ByLayer</div>
<div class="a" style="left:1354px;top:103px;width:74px;height:1.5px;background:#e8e8e8"></div>
<div class="t" style="left:1430px;top:97.3px;font-size:15px;color:#f0f0f0;">ByLayer</div>
<div class="a" style="left:1354px;top:133px;width:74px;height:1.5px;background:#e8e8e8"></div>
<div class="t" style="left:1430px;top:127.3px;font-size:15px;color:#f0f0f0;">ByLayer</div>
<svg class="a" style="left:1500.5px;top:70.5px;" width="9" height="5" viewBox="0 0 9 5"><path d="M0 0H9L4.5 5Z" fill="#f0f0f0"/></svg>
<svg class="a" style="left:1500.5px;top:101.5px;" width="9" height="5" viewBox="0 0 9 5"><path d="M0 0H9L4.5 5Z" fill="#f0f0f0"/></svg>
<svg class="a" style="left:1500.5px;top:131.5px;" width="9" height="5" viewBox="0 0 9 5"><path d="M0 0H9L4.5 5Z" fill="#f0f0f0"/></svg>
<svg class="a" style="left:1522px;top:60px;" width="46" height="42" viewBox="0 0 46 42"><rect x="2" y="2" width="23" height="38" fill="none" stroke="#c8c8c8" stroke-dasharray="2 2"/><rect x="6" y="6" width="13" height="13" fill="#e8e090" stroke="#333" stroke-width=".5"/><circle cx="12" cy="31" r="6" fill="#e0e4ea" stroke="#333" stroke-width=".6"/><path d="M12 31L20 20" stroke="#ddd" stroke-width="1.5"/><path d="M28 3V37M14 20H44M18 8L38 32M38 8L18 32" stroke="#a8d8f8" stroke-width="1.2"/><circle cx="28" cy="20" r="6" fill="#e8f8ff"/></svg>
<div class="t" style="left:1343px;width:400px;text-align:center;top:108.1px;font-size:15px;color:#f0f0f0;">Group</div>
<svg class="a" style="left:1573px;top:61px;" width="22" height="20" viewBox="0 0 22 20"><rect x="2" y="2" width="8" height="17" fill="none" stroke="#c8c8c8" stroke-dasharray="1.5 1.5"/><rect x="3" y="4" width="6" height="6" fill="#e8e090"/><circle cx="6" cy="15" r="3" fill="#e0e4ea"/><path d="M12 13L20 4" stroke="#f0c030" stroke-width="2"/></svg>
<svg class="a" style="left:1573px;top:93px;" width="22" height="22" viewBox="0 0 22 22"><rect x="2" y="2" width="9" height="18" fill="none" stroke="#c8c8c8" stroke-dasharray="1.5 1.5"/><rect x="4" y="5" width="5" height="5" fill="#e0e0e0"/><rect x="4" y="13" width="5" height="5" fill="#8ab0e0"/><path d="M13 6H20M16.5 2.5V9.5M13 15H20" stroke="#e0e0e0" stroke-width="1.2"/></svg>
<div class="a" style="left:1569px;top:121px;width:30px;height:28px;background:linear-gradient(#6a8ac0,#4a6aa8);border:1px solid #2a4070"></div>
<svg class="a" style="left:1574px;top:125px;" width="20" height="20" viewBox="0 0 20 20"><rect x="2" y="2" width="5" height="5" fill="#e0e0e0"/><rect x="2" y="11" width="5" height="5" fill="#e0e0e0"/><path d="M9 5L18 13H14L16 18L14 19L12 14L9 17Z" fill="#f0e8a0" stroke="#333" stroke-width=".5"/></svg>
<svg class="a" style="left:1626px;top:68px;" width="40" height="28" viewBox="0 0 40 28"><path d="M2 1V15M38 1V15" stroke="#e0e0e0" stroke-width="1.5"/><path d="M3 7H37" stroke="#e0e0e0" stroke-width="1.5"/><path d="M3 7L8 4V10ZM37 7L32 4V10Z" fill="#e0e0e0"/><rect x="2" y="18" width="36" height="8" fill="#f0c020" stroke="#a07010" stroke-width=".7"/><path d="M6 18V21M10 18V21M14 18V22M18 18V21M22 18V21M26 18V22M30 18V21M34 18V21" stroke="#a07010" stroke-width=".8"/></svg>
<div class="t" style="left:1447px;width:400px;text-align:center;top:108.8px;font-size:15px;color:#f0f0f0;">Measure</div>
<svg class="a" style="left:1642.5px;top:128.5px;" width="9" height="5" viewBox="0 0 9 5"><path d="M0 0H9L4.5 5Z" fill="#f0f0f0"/></svg>
<svg class="a" style="left:1693px;top:61px;" width="22" height="22" viewBox="0 0 22 22"><path d="M1 9H13M7 3V15" stroke="#e0e0e0" stroke-width="1.2"/><rect x="4" y="6" width="6" height="6" fill="none" stroke="#e0e0e0" stroke-width="1.2"/><rect x="10" y="12" width="10" height="9" fill="#e8e8e8" stroke="#555" stroke-width=".5"/><path d="M10 15H20M10 18H20M13 12V21M17 12V21" stroke="#777" stroke-width=".6"/><path d="M16 1L13 6H17L14 11" stroke="#f0a020" stroke-width="1.5" fill="none"/></svg>
<svg class="a" style="left:1693px;top:93px;" width="22" height="22" viewBox="0 0 22 22"><path d="M11 1V21M1 11H21" stroke="#d8d8d8" stroke-width="1.3"/><circle cx="11" cy="11" r="4" fill="none" stroke="#d8d8d8" stroke-width="1.3"/></svg>
<svg class="a" style="left:1696px;top:124px;" width="16" height="22" viewBox="0 0 16 22"><rect x="1" y="1" width="14" height="20" rx="1" fill="#e8e8e8" stroke="#444" stroke-width=".6"/><rect x="3" y="3" width="10" height="4" fill="#666"/><path d="M3 10H13M3 14H13M3 18H13M6.5 8V21M9.5 8V21" stroke="#888" stroke-width=".8"/></svg>
<svg class="a" style="left:1740px;top:61px;" width="38" height="40" viewBox="0 0 38 40"><rect x="2" y="4" width="24" height="31" rx="2" fill="#c8c0b0" stroke="#333" stroke-width=".7"/><rect x="8" y="1" width="12" height="5" rx="2" fill="#e8e8e8" stroke="#333" stroke-width=".6"/><path d="M10 12H28L35 19V38H10Z" fill="#f0f0f4" stroke="#333" stroke-width=".7"/><path d="M28 12V19H35" fill="#ddd" stroke="#555" stroke-width=".6"/></svg>
<div class="t" style="left:1557px;width:400px;text-align:center;top:108.8px;font-size:15px;color:#f0f0f0;">Paste</div>
<svg class="a" style="left:1752.5px;top:129.5px;" width="9" height="5" viewBox="0 0 9 5"><path d="M0 0H9L4.5 5Z" fill="#f0f0f0"/></svg>
<svg class="a" style="left:1792px;top:63px;" width="22" height="20" viewBox="0 0 22 20"><path d="M3 1L15 13M19 1L7 13" stroke="#d8d8d8" stroke-width="2"/><circle cx="5" cy="16" r="3" fill="none" stroke="#333" stroke-width="1.6"/><circle cx="17" cy="16" r="3" fill="none" stroke="#333" stroke-width="1.6"/></svg>
<svg class="a" style="left:1792px;top:94px;" width="22" height="22" viewBox="0 0 22 22"><path d="M1 1H11L14 4V17H1Z" fill="#e8e8e8" stroke="#333" stroke-width=".6"/><path d="M6 5H16L20 9V21H6Z" fill="#f0f0f4" stroke="#333" stroke-width=".6"/></svg>
<svg class="a" style="left:1845px;top:68px;" width="35" height="26" viewBox="0 0 35 26"><path d="M1 2H11V7H33V25H1Z" fill="#e8e8ec" stroke="#222" stroke-width="1"/></svg>
<div class="t" style="left:1662px;width:400px;text-align:center;top:108.8px;font-size:15px;color:#f0f0f0;">Base</div>
<svg class="a" style="left:1857.5px;top:129.5px;" width="9" height="5" viewBox="0 0 9 5"><path d="M0 0H9L4.5 5Z" fill="#f0f0f0"/></svg>
<div class="a" style="left:0px;top:178px;width:1910px;height:31px;background:#3a3a3a"></div>
<div class="a" style="left:0px;top:209px;width:1910px;height:4px;background:linear-gradient(#5a5a5a,#686868)"></div>
<svg class="a" style="left:0px;top:176px;" width="40" height="36" viewBox="0 0 40 36"><g transform="translate(0 -176)"><path d="M-10 208 C0 208 3 200 6 192 C9 184 12 181 20 181 H0Z" fill="#2e2e2e" opacity=".0"/><path d="M0 181H6C12 181 14 184 16 192C18 200 20 207 26 208H0Z" fill="#323232"/></g></svg>
<svg class="a" style="left:0px;top:176px;" width="1910" height="36" viewBox="0 0 1910 36"><g transform="translate(0 -176)"><path d="M8 208 C17 208 20 202 23 193 C26 184 29 181 38 181 H153 C161 181 164 184 167 193 C170 202 173 208 181 208 Z" fill="url(#tgi)"/><path d="M27 182 C30 181.5 34 181.5 38 181.5 H153 C157 181.5 161 182 163 184" fill="none" stroke="#6a6a6a" stroke-width="1"/></g></svg>
<svg class="a" style="left:0px;top:176px;" width="1910" height="36" viewBox="0 0 1910 36"><g transform="translate(0 -176)"><path d="M324 208 C333 208 336 202 339 193 C342 184 345 181 354 181 H462 C470 181 473 184 476 193 C479 202 482 208 490 208 Z" fill="url(#tgi)"/><path d="M343 182 C346 181.5 350 181.5 354 181.5 H462 C466 181.5 470 182 472 184" fill="none" stroke="#6a6a6a" stroke-width="1"/></g></svg>
<svg class="a" style="left:0px;top:176px;" width="1910" height="36" viewBox="0 0 1910 36"><g transform="translate(0 -176)"><path d="M166 208 C175 208 178 202 181 193 C184 184 187 181 196 181 H307 C315 181 318 184 321 193 C324 202 327 208 335 208 Z" fill="url(#tg)"/><path d="M185 182 C188 181.5 192 181.5 196 181.5 H307 C311 181.5 315 182 317 184" fill="none" stroke="#8a8a8a" stroke-width="1"/></g></svg>
<svg class="a" style="left:0px;top:0px;" width="1" height="1" viewBox="0 0 1 1"><defs><linearGradient id="tg" x1="0" y1="0" x2="0" y2="1"><stop offset="0" stop-color="#7a7a7a"/><stop offset="1" stop-color="#5c5c5c"/></linearGradient><linearGradient id="tgi" x1="0" y1="0" x2="0" y2="1"><stop offset="0" stop-color="#5a5a5a"/><stop offset="1" stop-color="#4c4c4c"/></linearGradient></defs></svg>
<div class="t" style="left:34px;top:189.3px;font-size:15px;color:#b8b8b8;">Start</div>
<div class="t" style="left:188.5px;top:189.3px;font-size:15px;color:#f2f2f2;">Drawing1*</div>
<div class="t" style="left:342px;top:189.3px;font-size:15px;color:#c0c0c0;">kesitler2*</div>
<svg class="a" style="left:303px;top:191px;" width="10" height="10" viewBox="0 0 10 10"><path d="M1.5 1.5L8.5 8.5M8.5 1.5L1.5 8.5" stroke="#3a3a3a" stroke-width="2"/></svg>
<svg class="a" style="left:457px;top:191px;" width="10" height="10" viewBox="0 0 10 10"><path d="M1.5 1.5L8.5 8.5M8.5 1.5L1.5 8.5" stroke="#3a3a3a" stroke-width="2"/></svg>
<svg class="a" style="left:488px;top:186px;" width="32" height="24" viewBox="0 0 32 24"><path d="M4 22C6 12 8 2 16 2H26C30 2 30 6 29 12C28 18 27 22 24 22Z" fill="#4a4a4a" stroke="#2e2e2e"/></svg>
<svg class="a" style="left:499px;top:190px;" width="12" height="12" viewBox="0 0 12 12"><path d="M6 1V11M1 6H11" stroke="#c8c8c8" stroke-width="2.2"/></svg>
<div class="a" style="left:1904px;top:213px;width:6px;height:757px;background:#b8cce4"></div>
<div class="a" style="left:1905px;top:213px;width:4px;height:88px;background:#c8d8ec"></div>
<div class="a" style="left:621px;top:213px;width:1.3px;height:757px;background:#f0f0f0"></div>
<div class="a" style="left:624px;top:213px;width:1.3px;height:757px;background:#f0f0f0"></div>
<svg class="a" style="left:633px;top:213px;" width="24" height="709" viewBox="0 0 24 709"><rect width="24" height="709" fill="#7f7f7f"/><rect x="6" width="1" height="709" fill="#848484"/><path d="M6.5 -3L14.5 9" stroke="#b07078" stroke-width="2" opacity=".6"/><path d="M12.5 3L19.5 -5" stroke="#555" stroke-width="1.4" opacity=".75"/><path d="M18 -4L23 2" stroke="#999" stroke-width="1" opacity=".6"/><path d="M6.5 21.0L14.5 33.0" stroke="#b07078" stroke-width="2" opacity=".6"/><path d="M12.5 27.0L19.5 19.0" stroke="#555" stroke-width="1.4" opacity=".75"/><path d="M18 20.0L23 26.0" stroke="#999" stroke-width="1" opacity=".6"/><path d="M6.5 45.0L14.5 57.0" stroke="#b07078" stroke-width="2" opacity=".6"/><path d="M12.5 51.0L19.5 43.0" stroke="#555" stroke-width="1.4" opacity=".75"/><path d="M18 44.0L23 50.0" stroke="#999" stroke-width="1" opacity=".6"/><path d="M6.5 69.0L14.5 81.0" stroke="#b07078" stroke-width="2" opacity=".6"/><path d="M12.5 75.0L19.5 67.0" stroke="#555" stroke-width="1.4" opacity=".75"/><path d="M18 68.0L23 74.0" stroke="#999" stroke-width="1" opacity=".6"/><path d="M6.5 93.0L14.5 105.0" stroke="#b07078" stroke-width="2" opacity=".6"/><path d="M12.5 99.0L19.5 91.0" stroke="#555" stroke-width="1.4" opacity=".75"/><path d="M18 92.0L23 98.0" stroke="#999" stroke-width="1" opacity=".6"/><path d="M6.5 117.0L14.5 129.0" stroke="#b07078" stroke-width="2" opacity=".6"/><path d="M12.5 123.0L19.5 115.0" stroke="#555" stroke-width="1.4" opacity=".75"/><path d="M18 116.0L23 122.0" stroke="#999" stroke-width="1" opacity=".6"/><path d="M6.5 141.0L14.5 153.0" stroke="#b07078" stroke-width="2" opacity=".6"/><path d="M12.5 147.0L19.5 139.0" stroke="#555" stroke-width="1.4" opacity=".75"/><path d="M18 140.0L23 146.0" stroke="#999" stroke-width="1" opacity=".6"/><path d="M6.5 165.0L14.5 177.0" stroke="#b07078" stroke-width="2" opacity=".6"/><path d="M12.5 171.0L19.5 163.0" stroke="#555" stroke-width="1.4" opacity=".75"/><path d="M18 164.0L23 170.0" stroke="#999" stroke-width="1" opacity=".6"/><path d="M6.5 189.0L14.5 201.0" stroke="#b07078" stroke-width="2" opacity=".6"/><path d="M12.5 195.0L19.5 187.0" stroke="#555" stroke-width="1.4" opacity=".75"/><path d="M18 188.0L23 194.0" stroke="#999" stroke-width="1" opacity=".6"/><path d="M6.5 213.0L14.5 225.0" stroke="#b07078" stroke-width="2" opacity=".6"/><path d="M12.5 219.0L19.5 211.0" stroke="#555" stroke-width="1.4" opacity=".75"/><path d="M18 212.0L23 218.0" stroke="#999" stroke-width="1" opacity=".6"/><path d="M6.5 237.0L14.5 249.0" stroke="#b07078" stroke-width="2" opacity=".6"/><path d="M12.5 243.0L19.5 235.0" stroke="#555" stroke-width="1.4" opacity=".75"/><path d="M18 236.0L23 242.0" stroke="#999" stroke-width="1" opacity=".6"/><path d="M6.5 261.0L14.5 273.0" stroke="#b07078" stroke-width="2" opacity=".6"/><path d="M12.5 267.0L19.5 259.0" stroke="#555" stroke-width="1.4" opacity=".75"/><path d="M18 260.0L23 266.0" stroke="#999" stroke-width="1" opacity=".6"/><path d="M6.5 285.0L14.5 297.0" stroke="#b07078" stroke-width="2" opacity=".6"/><path d="M12.5 291.0L19.5 283.0" stroke="#555" stroke-width="1.4" opacity=".75"/><path d="M18 284.0L23 290.0" stroke="#999" stroke-width="1" opacity=".6"/><path d="M6.5 309.0L14.5 321.0" stroke="#b07078" stroke-width="2" opacity=".6"/><path d="M12.5 315.0L19.5 307.0" stroke="#555" stroke-width="1.4" opacity=".75"/><path d="M18 308.0L23 314.0" stroke="#999" stroke-width="1" opacity=".6"/><path d="M6.5 333.0L14.5 345.0" stroke="#b07078" stroke-width="2" opacity=".6"/><path d="M12.5 339.0L19.5 331.0" stroke="#555" stroke-width="1.4" opacity=".75"/><path d="M18 332.0L23 338.0" stroke="#999" stroke-width="1" opacity=".6"/><path d="M6.5 357.0L14.5 369.0" stroke="#b07078" stroke-width="2" opacity=".6"/><path d="M12.5 363.0L19.5 355.0" stroke="#555" stroke-width="1.4" opacity=".75"/><path d="M18 356.0L23 362.0" stroke="#999" stroke-width="1" opacity=".6"/><path d="M6.5 381.0L14.5 393.0" stroke="#b07078" stroke-width="2" opacity=".6"/><path d="M12.5 387.0L19.5 379.0" stroke="#555" stroke-width="1.4" opacity=".75"/><path d="M18 380.0L23 386.0" stroke="#999" stroke-width="1" opacity=".6"/><path d="M6.5 405.0L14.5 417.0" stroke="#b07078" stroke-width="2" opacity=".6"/><path d="M12.5 411.0L19.5 403.0" stroke="#555" stroke-width="1.4" opacity=".75"/><path d="M18 404.0L23 410.0" stroke="#999" stroke-width="1" opacity=".6"/><path d="M6.5 429.0L14.5 441.0" stroke="#b07078" stroke-width="2" opacity=".6"/><path d="M12.5 435.0L19.5 427.0" stroke="#555" stroke-width="1.4" opacity=".75"/><path d="M18 428.0L23 434.0" stroke="#999" stroke-width="1" opacity=".6"/><path d="M6.5 453.0L14.5 465.0" stroke="#b07078" stroke-width="2" opacity=".6"/><path d="M12.5 459.0L19.5 451.0" stroke="#555" stroke-width="1.4" opacity=".75"/><path d="M18 452.0L23 458.0" stroke="#999" stroke-width="1" opacity=".6"/><path d="M6.5 477.0L14.5 489.0" stroke="#b07078" stroke-width="2" opacity=".6"/><path d="M12.5 483.0L19.5 475.0" stroke="#555" stroke-width="1.4" opacity=".75"/><path d="M18 476.0L23 482.0" stroke="#999" stroke-width="1" opacity=".6"/><path d="M6.5 501.0L14.5 513.0" stroke="#b07078" stroke-width="2" opacity=".6"/><path d="M12.5 507.0L19.5 499.0" stroke="#555" stroke-width="1.4" opacity=".75"/><path d="M18 500.0L23 506.0" stroke="#999" stroke-width="1" opacity=".6"/><path d="M6.5 525.0L14.5 537.0" stroke="#b07078" stroke-width="2" opacity=".6"/><path d="M12.5 531.0L19.5 523.0" stroke="#555" stroke-width="1.4" opacity=".75"/><path d="M18 524.0L23 530.0" stroke="#999" stroke-width="1" opacity=".6"/><path d="M6.5 549.0L14.5 561.0" stroke="#b07078" stroke-width="2" opacity=".6"/><path d="M12.5 555.0L19.5 547.0" stroke="#555" stroke-width="1.4" opacity=".75"/><path d="M18 548.0L23 554.0" stroke="#999" stroke-width="1" opacity=".6"/><path d="M6.5 573.0L14.5 585.0" stroke="#b07078" stroke-width="2" opacity=".6"/><path d="M12.5 579.0L19.5 571.0" stroke="#555" stroke-width="1.4" opacity=".75"/><path d="M18 572.0L23 578.0" stroke="#999" stroke-width="1" opacity=".6"/><path d="M6.5 597.0L14.5 609.0" stroke="#b07078" stroke-width="2" opacity=".6"/><path d="M12.5 603.0L19.5 595.0" stroke="#555" stroke-width="1.4" opacity=".75"/><path d="M18 596.0L23 602.0" stroke="#999" stroke-width="1" opacity=".6"/><path d="M6.5 621.0L14.5 633.0" stroke="#b07078" stroke-width="2" opacity=".6"/><path d="M12.5 627.0L19.5 619.0" stroke="#555" stroke-width="1.4" opacity=".75"/><path d="M18 620.0L23 626.0" stroke="#999" stroke-width="1" opacity=".6"/><path d="M6.5 645.0L14.5 657.0" stroke="#b07078" stroke-width="2" opacity=".6"/><path d="M12.5 651.0L19.5 643.0" stroke="#555" stroke-width="1.4" opacity=".75"/><path d="M18 644.0L23 650.0" stroke="#999" stroke-width="1" opacity=".6"/><path d="M6.5 669.0L14.5 681.0" stroke="#b07078" stroke-width="2" opacity=".6"/><path d="M12.5 675.0L19.5 667.0" stroke="#555" stroke-width="1.4" opacity=".75"/><path d="M18 668.0L23 674.0" stroke="#999" stroke-width="1" opacity=".6"/><path d="M6.5 693.0L14.5 705.0" stroke="#b07078" stroke-width="2" opacity=".6"/><path d="M12.5 699.0L19.5 691.0" stroke="#555" stroke-width="1.4" opacity=".75"/><path d="M18 692.0L23 698.0" stroke="#999" stroke-width="1" opacity=".6"/></svg>
<svg class="a" style="left:600px;top:430px;" width="150" height="180" viewBox="0 0 150 180"><g transform="translate(-600 -430)"><rect x="661" y="438" width="24" height="7" fill="#787878" opacity="1"/><rect x="661" y="445" width="24" height="32" fill="#c6c6c6" opacity="1"/><path d="M668 447L676 470" stroke="#c89090" stroke-width="1.2"/><path d="M673 447L673 476" stroke="#b08080" stroke-width="1"/><path d="M677 447L677 476" stroke="#b08080" stroke-width="1"/><rect x="661" y="453" width="24" height="3" fill="#e0e0e0" opacity="1"/><rect x="661" y="462" width="24" height="3" fill="#e0e0e0" opacity="1"/><rect x="661" y="477" width="24" height="20" fill="#a8a8a8" opacity="1"/><rect x="661" y="497" width="24" height="14" fill="#8a8a8a" opacity="1"/><rect x="660" y="477" width="32" height="18" fill="#bcbcbc" opacity="1"/><path d="M660 477L660 495" stroke="#f0f0f0" stroke-width="1.2"/><path d="M692 478L692 495" stroke="#e8e8e8" stroke-width="1.5"/><path d="M662 483L690 483" stroke="#f0f0f0" stroke-width="1.5"/><path d="M662 489L688 489" stroke="#d08060" stroke-width="1.5"/><path d="M664 486L680 486" stroke="#e0a090" stroke-width="1.2"/><rect x="679" y="488" width="7" height="4" fill="#60c8c8" opacity="0.8"/><rect x="683" y="480" width="5" height="3" fill="#fff" opacity="1"/><rect x="661" y="497" width="24" height="14" fill="#6a6a6a" opacity="1"/><ellipse cx="675.5" cy="506" rx="7" ry="5.5" fill="#181818" stroke="#f4f4f4" stroke-width="2.4"/><rect x="669" y="497" width="13" height="4" fill="#e8ecec" opacity="1"/><rect x="718" y="461" width="24" height="25" fill="#787878" opacity="1"/><path d="M724 468L732 479" stroke="#b07070" stroke-width="1.3" opacity=".7"/><path d="M731 478L739 468" stroke="#555" stroke-width="1.2" opacity=".8"/><rect x="633" y="477" width="24" height="93" fill="#cfcfcf" opacity="1"/><rect x="609" y="492" width="38" height="25" fill="#dcdcdc" opacity="1"/><path d="M619 499L627 510" stroke="#b07070" stroke-width="1.3" opacity=".7"/><path d="M626 509L634 499" stroke="#555" stroke-width="1.2" opacity=".8"/><rect x="620" y="477" width="13" height="15" fill="#a07040" opacity="1"/><rect x="622" y="478" width="11" height="3" fill="#f0f0f0" opacity="1"/><rect x="626" y="483" width="7" height="6" fill="#202020" opacity="1"/><rect x="621" y="484" width="12" height="1.5" fill="#f0f0f0" opacity="1"/><path d="M640 527L644 523M645 527L649 523M650 527L654 523M636 527L640 523" stroke="#d07070" stroke-width="1.5"/><rect x="635" y="520" width="22" height="2" fill="#b0a0a0" opacity="0.7"/><rect x="634" y="550" width="23" height="20" fill="#e0e0e0" opacity="0.5"/><rect x="657" y="511" width="7" height="23" fill="#b4b4b4" opacity="1"/><rect x="657" y="520" width="8" height="14" fill="#909090" opacity="1"/><rect x="664" y="520" width="24" height="25" fill="#a4a4a4" opacity="1"/><rect x="664" y="545" width="24" height="24" fill="#868686" opacity="1"/><path d="M666 537L670 533M671 537L675 533M676 537L680 533M681 537L685 533" stroke="#c07878" stroke-width="1.3"/><rect x="685" y="535" width="24" height="25" fill="#7c7c7c" opacity="1"/><path d="M691.4 543.2L697.8 552.0" stroke="#b07070" stroke-width="1.3" opacity=".7"/><path d="M697 551.2L703.4 543.2" stroke="#555" stroke-width="1.2" opacity=".8"/><rect x="664" y="572" width="21" height="25" fill="#787878" opacity="1"/><rect x="688" y="572" width="21" height="25" fill="#787878" opacity="1"/><rect x="685" y="572" width="3" height="25" fill="#b8b8b8" opacity="1"/><path d="M669.4 581.2L675.8 590.0" stroke="#b07070" stroke-width="1.3" opacity=".7"/><path d="M675 589.2L681.4 581.2" stroke="#555" stroke-width="1.2" opacity=".8"/><path d="M693.4 581.2L699.8 590.0" stroke="#b07070" stroke-width="1.3" opacity=".7"/><path d="M699 589.2L705.4 581.2" stroke="#555" stroke-width="1.2" opacity=".8"/><rect x="633" y="570" width="24" height="5" fill="#b4b4b4" opacity="1"/><path d="M622 519L631 519" stroke="#f0f0f0" stroke-width="1.6"/><path d="M622 534L631 534" stroke="#f0f0f0" stroke-width="1.6"/><rect x="626" y="522" width="4" height="10" fill="#40a060" opacity="0.5"/><path d="M653.5 443L653.5 480" stroke="#f4f4f4" stroke-width="1.4"/><path d="M653 471.5L710 471.5" stroke="#f4f4f4" stroke-width="1.4"/><path d="M710.5 471L710.5 510" stroke="#f4f4f4" stroke-width="1.4"/><path d="M710 510L668 522" stroke="#e8e8e8" stroke-width="1.4"/><path d="M637 545.5L677 545.5" stroke="#f4f4f4" stroke-width="1.4"/><path d="M644 554.5L699 554.5" stroke="#f4f4f4" stroke-width="1.4"/><path d="M655.5 554L655.5 582" stroke="#f4f4f4" stroke-width="1.4"/><path d="M676.5 545L676.5 582" stroke="#f4f4f4" stroke-width="1.4"/><path d="M656 581.5L677 581.5" stroke="#f4f4f4" stroke-width="1.4"/><path d="M625 580L641 548" stroke="#e0e0e0" stroke-width="1.3"/><path d="M657 527L668 548" stroke="#e0e0e0" stroke-width="1.3"/><rect x="649.75" y="439.75" width="6.5" height="6.5" fill="#1e8ae8"/><rect x="649.75" y="453.75" width="6.5" height="6.5" fill="#1e8ae8"/><rect x="649.75" y="476.75" width="6.5" height="6.5" fill="#1e8ae8"/><rect x="706.75" y="467.75" width="6.5" height="6.5" fill="#1e8ae8"/><rect x="706.75" y="506.75" width="6.5" height="6.5" fill="#1e8ae8"/><rect x="640.75" y="505.75" width="6.5" height="6.5" fill="#1e8ae8"/><rect x="649.75" y="511.75" width="6.5" height="6.5" fill="#1e8ae8"/><rect x="621.75" y="522.25" width="6.5" height="6.5" fill="#1e8ae8"/><rect x="633.75" y="541.75" width="6.5" height="6.5" fill="#1e8ae8"/><rect x="640.75" y="550.75" width="6.5" height="6.5" fill="#1e8ae8"/><rect x="652.75" y="550.75" width="6.5" height="6.5" fill="#1e8ae8"/><rect x="665.75" y="550.75" width="6.5" height="6.5" fill="#1e8ae8"/><rect x="695.75" y="550.75" width="6.5" height="6.5" fill="#1e8ae8"/><rect x="621.75" y="576.75" width="6.5" height="6.5" fill="#1e8ae8"/><rect x="652.75" y="578.75" width="6.5" height="6.5" fill="#1e8ae8"/><rect x="618.5" y="530.0" width="7" height="16" fill="#1e8ae8"/><rect x="649.75" y="467.75" width="6.5" height="6.5" fill="#5aa8e8"/><rect x="640.75" y="541.75" width="6.5" height="6.5" fill="#5aa8e8"/><rect x="665.25" y="541.75" width="6.5" height="6.5" fill="#5aa8e8"/><rect x="673.75" y="541.75" width="6.5" height="6.5" fill="#5aa8e8"/><rect x="673.75" y="578.75" width="6.5" height="6.5" fill="#5aa8e8"/></g></svg>
<svg class="a" style="left:505px;top:565px;" width="85" height="80" viewBox="0 0 85 80"><g transform="translate(-505 -565)" stroke="#f0f0f0" stroke-width="1.3" fill="none"><path d="M514.5 587V636.3H564"/><rect x="510.2" y="631" width="9.7" height="9.7"/><path d="M516 569L522.5 575.5L529 569M522.5 575.5V582"/><path d="M569 622L582 635M582 622L569 635"/></g></svg>
<svg class="a" style="left:1740px;top:245px;" width="160" height="150" viewBox="0 0 160 150"><g transform="translate(-1740 -245)"><circle cx="1821" cy="319" r="52" fill="none" stroke="#333333" stroke-width="13"/><rect x="1795.5" y="293.5" width="51.5" height="51.5" fill="#9a9a9a"/><rect x="1805" y="304" width="32" height="31" fill="#8c8c8c"/><text x="1821" y="324.5" text-anchor="middle" font-family="Liberation Sans" font-weight="bold" font-size="13" fill="#505050">TOP</text><g font-family="Liberation Sans" font-weight="bold" font-size="21" fill="#9a9a9a" text-anchor="middle"><text x="1821" y="271">N</text><text x="1821" y="385">S</text><text x="1764" y="328">W</text><text x="1877" y="328">E</text></g></g></svg>
<div class="a" style="left:1797px;top:407px;width:48px;height:18px;background:#8e8e8e;border-radius:4px"></div>
<div class="t" style="left:1801px;top:410.7px;font-size:11px;color:#505050;">WCS</div>
<svg class="a" style="left:1832px;top:413px;" width="7" height="4" viewBox="0 0 7 4"><path d="M0 2H7" stroke="#aaa" stroke-width="1.5"/></svg>
<div class="a" style="left:1843px;top:228px;width:10px;height:3px;background:#f0f0f0"></div>
<svg class="a" style="left:1862px;top:223px;" width="12" height="12" viewBox="0 0 12 12"><rect x="1" y="4" width="7" height="7" fill="none" stroke="#f0f0f0" stroke-width="2"/><path d="M4 4V1H11V8H8" fill="none" stroke="#f0f0f0" stroke-width="1.5"/></svg>
<svg class="a" style="left:1883px;top:223px;" width="10" height="10" viewBox="0 0 10 10"><path d="M1 1L9 9M9 1L1 9" stroke="#f0f0f0" stroke-width="2"/></svg>
<div class="a" style="left:607px;top:936px;width:69px;height:34px;background:linear-gradient(#5e5e5e,#363636);border-radius:3px 0 0 3px"></div>
<svg class="a" style="left:611px;top:941px;" width="8" height="26" viewBox="0 0 8 26"><rect x="0" y="1" width="2" height="2" fill="#a0a0a0"/><rect x="0" y="5" width="2" height="2" fill="#a0a0a0"/><rect x="0" y="9" width="2" height="2" fill="#a0a0a0"/><rect x="0" y="13" width="2" height="2" fill="#a0a0a0"/><rect x="0" y="17" width="2" height="2" fill="#a0a0a0"/><rect x="0" y="21" width="2" height="2" fill="#a0a0a0"/><rect x="4" y="1" width="2" height="2" fill="#a0a0a0"/><rect x="4" y="5" width="2" height="2" fill="#a0a0a0"/><rect x="4" y="9" width="2" height="2" fill="#a0a0a0"/><rect x="4" y="13" width="2" height="2" fill="#a0a0a0"/><rect x="4" y="17" width="2" height="2" fill="#a0a0a0"/><rect x="4" y="21" width="2" height="2" fill="#a0a0a0"/></svg>
<svg class="a" style="left:626px;top:947px;" width="12" height="12" viewBox="0 0 12 12"><path d="M1.5 1.5L10.5 10.5M10.5 1.5L1.5 10.5" stroke="#e0e0e0" stroke-width="2"/></svg>
<svg class="a" style="left:650px;top:942px;" width="22" height="22" viewBox="0 0 22 22"><circle cx="7" cy="7" r="4.5" fill="none" stroke="#d0d0d0" stroke-width="3"/><path d="M9.5 9.5L18.5 18.5" stroke="#d0d0d0" stroke-width="3.6" stroke-linecap="round"/><path d="M0 3.5L3.5 0L7.5 4L4 7.5Z" fill="#585858"/></svg>
<div class="a" style="left:675px;top:937px;width:626px;height:33px;background:#b4b4b4;border-radius:0 3px 3px 0"></div>
<svg class="a" style="left:680px;top:943px;" width="20" height="18" viewBox="0 0 20 18"><rect x=".5" y=".5" width="19" height="17" rx="2" fill="#9a9a9a" stroke="#888"/><path d="M4 5L9 9L4 13M10 13H15" stroke="#444" stroke-width="1.5" fill="none"/></svg>
<svg class="a" style="left:703.5px;top:951.0px;" width="7" height="4" viewBox="0 0 7 4"><path d="M0 0H7L3.5 4Z" fill="#666"/></svg>
<div class="t" style="left:720.5px;top:945.3px;font-size:18px;color:#6a6a6a;font-family:'Liberation Mono',monospace;font-style:italic">Type a command</div>
<svg class="a" style="left:1285px;top:950px;" width="10" height="6" viewBox="0 0 10 6"><path d="M0 6H10L5 0Z" fill="#222"/></svg>
<div class="a" style="left:621px;top:936px;width:1.3px;height:34px;background:#e8e8e8;opacity:.8"></div>
<div class="a" style="left:624px;top:936px;width:1.3px;height:34px;background:#e8e8e8;opacity:.8"></div>
<div class="a" style="left:0px;top:970px;width:1910px;height:60px;background:#3b3b3b"></div>
<div class="a" style="left:0px;top:970px;width:1910px;height:1px;background:#2a2a2a"></div>
<div class="a" style="left:0px;top:971px;width:1910px;height:1px;background:#5a5a5a"></div>
<svg class="a" style="left:0px;top:970px;" width="290" height="26" viewBox="0 0 290 26"><defs><linearGradient id="mg" x1="0" y1="0" x2="0" y2="1"><stop offset="0" stop-color="#8a8a8a"/><stop offset="1" stop-color="#6a6a6a"/></linearGradient></defs><path d="M2 1H80C77 1 76 4 75 12C74 20 72 24 68 24H17C13 24 11 20 10 12C9 4 7 1 2 1Z" fill="url(#mg)" stroke="#2e2e2e" stroke-width=".8"/><path d="M81 1H162C159 1 158 4 157 12C156 20 154 24 150 24H97C93 24 91 20 90 12C89 4 87 1 81 1Z" fill="#555555" stroke="#2e2e2e" stroke-width=".8"/><path d="M162 1H244C241 1 240 4 239 12C238 20 236 24 232 24H178C174 24 172 20 171 12C170 4 168 1 162 1Z" fill="#555555" stroke="#2e2e2e" stroke-width=".8"/><path d="M248 23C250 14 253 3 260 2H275C278 2 277 8 275 14C273 20 272 23 268 23Z" fill="#4a4a4a" stroke="#2e2e2e" stroke-width=".8"/></svg>
<div class="t" style="left:23px;top:975.3px;font-size:15px;color:#ffffff;font-weight:bold">Model</div>
<div class="t" style="left:96px;top:975.7px;font-size:14.5px;color:#c8c8c8;">Layout1</div>
<div class="t" style="left:177px;top:975.7px;font-size:14.5px;color:#c8c8c8;">Layout2</div>
<svg class="a" style="left:257px;top:977px;" width="12" height="12" viewBox="0 0 12 12"><path d="M6 1V11M1 6H11" stroke="#c8c8c8" stroke-width="2.2"/></svg>
<div class="a" style="left:439px;top:996.5px;width:1471px;height:33px;background:#535353;border-top:2px solid #747474;border-bottom:2px solid #747474"></div>
<div class="a" style="left:439px;top:997px;width:2px;height:32px;background:#747474"></div>
<div class="a" style="left:666px;top:998px;width:1.5px;height:31px;background:#747474"></div>
<div class="a" style="left:728px;top:998px;width:1.5px;height:31px;background:#747474"></div>
<div class="a" style="left:811px;top:998px;width:1.5px;height:31px;background:#747474"></div>
<div class="a" style="left:842px;top:998px;width:1.5px;height:31px;background:#747474"></div>
<div class="a" style="left:873.5px;top:998px;width:1.5px;height:31px;background:#747474"></div>
<div class="a" style="left:1002.7px;top:998px;width:1.5px;height:31px;background:#747474"></div>
<div class="a" style="left:1082.3px;top:998px;width:1.5px;height:31px;background:#747474"></div>
<div class="a" style="left:1113px;top:998px;width:1.5px;height:31px;background:#747474"></div>
<div class="a" style="left:1144.5px;top:998px;width:1.5px;height:31px;background:#747474"></div>
<div class="a" style="left:1175.3px;top:998px;width:1.5px;height:31px;background:#747474"></div>
<div class="a" style="left:1226px;top:998px;width:1.5px;height:31px;background:#747474"></div>
<div class="a" style="left:1357px;top:998px;width:1.5px;height:31px;background:#747474"></div>
<div class="a" style="left:1491px;top:998px;width:1.5px;height:31px;background:#747474"></div>
<div class="a" style="left:1542.3px;top:998px;width:1.5px;height:31px;background:#747474"></div>
<div class="a" style="left:1574.2px;top:998px;width:1.5px;height:31px;background:#747474"></div>
<div class="a" style="left:1697.3px;top:998px;width:1.5px;height:31px;background:#747474"></div>
<div class="a" style="left:1729.2px;top:998px;width:1.5px;height:31px;background:#747474"></div>
<div class="a" style="left:1780.2px;top:998px;width:1.5px;height:31px;background:#747474"></div>
<div class="a" style="left:1811.5px;top:998px;width:1.5px;height:31px;background:#747474"></div>
<div class="a" style="left:1845px;top:998px;width:1.5px;height:31px;background:#747474"></div>
<div class="a" style="left:1851.7px;top:998px;width:1.5px;height:31px;background:#747474"></div>
<div class="t" style="left:457.4px;top:1006.7px;font-size:14px;color:#f0f0f0;">4167.2314, 16797.9430, 0.0000</div>
<div class="t" style="left:672.4px;top:1006.7px;font-size:14px;color:#f0f0f0;">MODEL</div>
<svg class="a" style="left:735px;top:1003px;" width="20" height="20" viewBox="0 0 20 20"><path d="M3 1V19" stroke="#c8c8c8" stroke-width="1.2"/><path d="M7 1V19" stroke="#c8c8c8" stroke-width="1.2"/><path d="M11 1V19" stroke="#c8c8c8" stroke-width="1.2"/><path d="M15 1V19" stroke="#c8c8c8" stroke-width="1.2"/><path d="M1 4H19" stroke="#c8c8c8" stroke-width=".8" stroke-dasharray="1 1"/><path d="M1 8H19" stroke="#c8c8c8" stroke-width=".8" stroke-dasharray="1 1"/><path d="M1 12H19" stroke="#c8c8c8" stroke-width=".8" stroke-dasharray="1 1"/><path d="M1 16H19" stroke="#c8c8c8" stroke-width=".8" stroke-dasharray="1 1"/></svg>
<svg class="a" style="left:765px;top:1003px;" width="20" height="20" viewBox="0 0 20 20"><rect x="2" y="2" width="1.6" height="1.6" fill="#c0c0c0"/><rect x="2" y="6" width="1.6" height="1.6" fill="#c0c0c0"/><rect x="2" y="10" width="1.6" height="1.6" fill="#c0c0c0"/><rect x="2" y="14" width="1.6" height="1.6" fill="#c0c0c0"/><rect x="2" y="18" width="1.6" height="1.6" fill="#c0c0c0"/><rect x="6" y="2" width="1.6" height="1.6" fill="#c0c0c0"/><rect x="6" y="6" width="1.6" height="1.6" fill="#c0c0c0"/><rect x="6" y="10" width="1.6" height="1.6" fill="#c0c0c0"/><rect x="6" y="14" width="1.6" height="1.6" fill="#c0c0c0"/><rect x="6" y="18" width="1.6" height="1.6" fill="#c0c0c0"/><rect x="10" y="2" width="1.6" height="1.6" fill="#c0c0c0"/><rect x="10" y="6" width="1.6" height="1.6" fill="#c0c0c0"/><rect x="10" y="10" width="1.6" height="1.6" fill="#c0c0c0"/><rect x="10" y="14" width="1.6" height="1.6" fill="#c0c0c0"/><rect x="10" y="18" width="1.6" height="1.6" fill="#c0c0c0"/><rect x="14" y="2" width="1.6" height="1.6" fill="#c0c0c0"/><rect x="14" y="6" width="1.6" height="1.6" fill="#c0c0c0"/><rect x="14" y="10" width="1.6" height="1.6" fill="#c0c0c0"/><rect x="14" y="14" width="1.6" height="1.6" fill="#c0c0c0"/><rect x="14" y="18" width="1.6" height="1.6" fill="#c0c0c0"/><rect x="18" y="2" width="1.6" height="1.6" fill="#c0c0c0"/><rect x="18" y="6" width="1.6" height="1.6" fill="#c0c0c0"/><rect x="18" y="10" width="1.6" height="1.6" fill="#c0c0c0"/><rect x="18" y="14" width="1.6" height="1.6" fill="#c0c0c0"/><rect x="18" y="18" width="1.6" height="1.6" fill="#c0c0c0"/></svg>
<svg class="a" style="left:794.5px;top:1009.5px;" width="9" height="5" viewBox="0 0 9 5"><path d="M0 0H9L4.5 5Z" fill="#f0f0f0"/></svg>
<svg class="a" style="left:819px;top:1001px;" width="20" height="24" viewBox="0 0 20 24"><path d="M7 19V4H16V11H9" stroke="#3a8ae8" stroke-width="2.2" fill="none"/><rect x="2" y="15" width="8" height="8" fill="#3a8ae8"/></svg>
<svg class="a" style="left:847px;top:1002px;" width="24" height="22" viewBox="0 0 24 22"><path d="M3 2V10M-1 6H7" stroke="#3a8ae8" stroke-width="2" transform="translate(1 0)"/><rect x="8" y="12" width="15" height="7" rx="1" fill="#3a8ae8"/></svg>
<svg class="a" style="left:879px;top:1002px;" width="22" height="22" viewBox="0 0 22 22"><path d="M3 1V19H20" stroke="#3a8ae8" stroke-width="2" fill="none"/><path d="M3 13H9V19" stroke="#3a8ae8" stroke-width="1.4" fill="none"/></svg>
<svg class="a" style="left:908px;top:1002px;" width="22" height="22" viewBox="0 0 22 22"><circle cx="10" cy="11" r="8" fill="none" stroke="#c8c8c8" stroke-width="2"/><path d="M10 11L18 6M10 11H21" stroke="#c8c8c8" stroke-width="1.5"/></svg>
<svg class="a" style="left:938.5px;top:1009.5px;" width="9" height="5" viewBox="0 0 9 5"><path d="M0 0H9L4.5 5Z" fill="#f0f0f0"/></svg>
<svg class="a" style="left:956px;top:1000px;" width="24" height="26" viewBox="0 0 24 26"><path d="M2 3L22 24M12 1V25" stroke="#b8b8b8" stroke-width="1.6"/></svg>
<svg class="a" style="left:987.5px;top:1009.5px;" width="9" height="5" viewBox="0 0 9 5"><path d="M0 0H9L4.5 5Z" fill="#f0f0f0"/></svg>
<svg class="a" style="left:1007px;top:1002px;" width="24" height="22" viewBox="0 0 24 22"><path d="M2 20H22M2 20L20 4" stroke="#3a8ae8" stroke-width="2" fill="none"/><circle cx="10" cy="13" r="2" fill="#3a8ae8"/></svg>
<svg class="a" style="left:1038px;top:1000px;" width="24" height="25" viewBox="0 0 24 25"><rect x="4" y="5" width="17" height="18" fill="none" stroke="#3a8ae8" stroke-width="2"/><rect x="1" y="1" width="7" height="7" fill="#1a5a1a"/><rect x="2.5" y="2.5" width="4" height="4" fill="#3ad03a"/></svg>
<svg class="a" style="left:1068.5px;top:1009.5px;" width="9" height="5" viewBox="0 0 9 5"><path d="M0 0H9L4.5 5Z" fill="#f0f0f0"/></svg>
<svg class="a" style="left:1087px;top:1003px;" width="22" height="20" viewBox="0 0 22 20"><rect x="1" y="2" width="20" height="3" fill="#e0e0e0"/><rect x="1" y="8" width="14" height="3" fill="#e0e0e0"/><rect x="1" y="14" width="18" height="2.5" fill="#e0e0e0"/><rect x="1" y="17.5" width="10" height="2" fill="#e0e0e0"/></svg>
<svg class="a" style="left:1119px;top:1003px;" width="20" height="20" viewBox="0 0 20 20"><rect x="1" y="1" width="18" height="18" fill="#d8d8d8"/><rect x="2" y="2" width="2.5" height="2.5" fill="#707070"/><rect x="2" y="7" width="2.5" height="2.5" fill="#707070"/><rect x="2" y="12" width="2.5" height="2.5" fill="#707070"/><rect x="2" y="17" width="2.5" height="2.5" fill="#707070"/><rect x="7" y="2" width="2.5" height="2.5" fill="#707070"/><rect x="7" y="7" width="2.5" height="2.5" fill="#707070"/><rect x="7" y="12" width="2.5" height="2.5" fill="#707070"/><rect x="7" y="17" width="2.5" height="2.5" fill="#707070"/><rect x="12" y="2" width="2.5" height="2.5" fill="#707070"/><rect x="12" y="7" width="2.5" height="2.5" fill="#707070"/><rect x="12" y="12" width="2.5" height="2.5" fill="#707070"/><rect x="12" y="17" width="2.5" height="2.5" fill="#707070"/><rect x="17" y="2" width="2.5" height="2.5" fill="#707070"/><rect x="17" y="7" width="2.5" height="2.5" fill="#707070"/><rect x="17" y="12" width="2.5" height="2.5" fill="#707070"/><rect x="17" y="17" width="2.5" height="2.5" fill="#707070"/><rect x="4.5" y="4.5" width="2.5" height="2.5" fill="#707070"/><rect x="4.5" y="9.5" width="2.5" height="2.5" fill="#707070"/><rect x="4.5" y="14.5" width="2.5" height="2.5" fill="#707070"/><rect x="9.5" y="4.5" width="2.5" height="2.5" fill="#707070"/><rect x="9.5" y="9.5" width="2.5" height="2.5" fill="#707070"/><rect x="9.5" y="14.5" width="2.5" height="2.5" fill="#707070"/><rect x="14.5" y="4.5" width="2.5" height="2.5" fill="#707070"/><rect x="14.5" y="9.5" width="2.5" height="2.5" fill="#707070"/><rect x="14.5" y="14.5" width="2.5" height="2.5" fill="#707070"/></svg>
<svg class="a" style="left:1149px;top:1002px;" width="22" height="22" viewBox="0 0 22 22"><path d="M3 1V8M0 4.5H7" stroke="#e0e0e0" stroke-width="1.3"/><rect x="6" y="7" width="11" height="11" fill="#60a050"/><rect x="9" y="10" width="12" height="11" fill="#90c878"/></svg>
<svg class="a" style="left:1180px;top:1001px;" width="24" height="24" viewBox="0 0 24 24"><path d="M12 6L22 10V20L12 24L2 20V10Z" fill="none" stroke="#c8c8c8" stroke-width="1.6"/><path d="M2 10L12 14L22 10M12 14V24" stroke="#c8c8c8" stroke-width="1.6" fill="none"/><rect x="1" y="1" width="8" height="8" fill="#1a5a1a"/><rect x="2.5" y="2.5" width="5" height="5" fill="#3ad03a"/></svg>
<svg class="a" style="left:1210.5px;top:1009.5px;" width="9" height="5" viewBox="0 0 9 5"><path d="M0 0H9L4.5 5Z" fill="#f0f0f0"/></svg>
<svg class="a" style="left:1232px;top:1002px;" width="22" height="22" viewBox="0 0 22 22"><path d="M2 1V20H21" stroke="#d0d0d0" stroke-width="1.6" fill="none"/><path d="M2 20L14 8" stroke="#d0d0d0" stroke-width="1.6"/><path d="M15 2L11 8H15L12 14" stroke="#d0d0d0" stroke-width="1.6" fill="none"/></svg>
<svg class="a" style="left:1262px;top:1002px;" width="22" height="22" viewBox="0 0 22 22"><path d="M11 2L20 6V16L11 20L2 16V6Z" fill="none" stroke="#a8a8a8" stroke-width="1.4"/><path d="M2 6L11 10L20 6M11 10V20" stroke="#a8a8a8" stroke-width="1.4" fill="none"/></svg>
<svg class="a" style="left:1292.5px;top:1009.5px;" width="9" height="5" viewBox="0 0 9 5"><path d="M0 0H9L4.5 5Z" fill="#f0f0f0"/></svg>
<svg class="a" style="left:1311px;top:1000px;" width="24" height="26" viewBox="0 0 24 26"><path d="M12 2L21 7V18L12 23L3 18V7Z" fill="none" stroke="#8a9ab8" stroke-width="1.6"/><circle cx="12" cy="13" r="2.2" fill="none" stroke="#f0c030" stroke-width="1.3"/><path d="M12 2V11" stroke="#3a70d0" stroke-width="1.8"/><path d="M3 21L10 14" stroke="#40b040" stroke-width="1.8"/><path d="M21 21L14 14" stroke="#d03030" stroke-width="1.8"/></svg>
<svg class="a" style="left:1341.5px;top:1009.5px;" width="9" height="5" viewBox="0 0 9 5"><path d="M0 0H9L4.5 5Z" fill="#f0f0f0"/></svg>
<svg class="a" style="left:1361px;top:1001px;" width="25" height="24" viewBox="0 0 25 24"><path d="M11 4L14 14L22 22L11 18L2 22L8 14Z" fill="#3a8ae8" stroke="#3a8ae8" stroke-width="2" stroke-linejoin="round"/><circle cx="17" cy="7" r="4.5" fill="none" stroke="#3a8ae8" stroke-width="2.4"/></svg>
<svg class="a" style="left:1392px;top:1001px;" width="24" height="24" viewBox="0 0 24 24"><path d="M10 4L13 14L21 22L10 18L1 22L7 14Z" fill="#c8c8c8" stroke="#c8c8c8" stroke-width="1.5" stroke-linejoin="round"/><path d="M18 1L14 7H19L15 13" stroke="#c8c8c8" stroke-width="1.6" fill="none"/></svg>
<svg class="a" style="left:1422px;top:1001px;" width="24" height="24" viewBox="0 0 24 24"><path d="M12 2L15 13L22 22L12 18L2 22L9 13Z" fill="#c8c8c8" stroke="#c8c8c8" stroke-width="1.5" stroke-linejoin="round"/></svg>
<div class="t" style="left:1455px;top:1005.9px;font-size:15px;color:#e8e8e8;transform:scaleX(.75);transform-origin:0 0">1:1</div>
<svg class="a" style="left:1475.5px;top:1009.5px;" width="9" height="5" viewBox="0 0 9 5"><path d="M0 0H9L4.5 5Z" fill="#f0f0f0"/></svg>
<svg class="a" style="left:1499px;top:1004px;" width="18" height="18" viewBox="0 0 18 18"><circle cx="9" cy="9" r="5.5" fill="none" stroke="#c8c8c8" stroke-width="4"/><rect x="7.5" y="0" width="3" height="4" fill="#c8c8c8" transform="rotate(0 9 9)"/><rect x="7.5" y="0" width="3" height="4" fill="#c8c8c8" transform="rotate(45 9 9)"/><rect x="7.5" y="0" width="3" height="4" fill="#c8c8c8" transform="rotate(90 9 9)"/><rect x="7.5" y="0" width="3" height="4" fill="#c8c8c8" transform="rotate(135 9 9)"/><rect x="7.5" y="0" width="3" height="4" fill="#c8c8c8" transform="rotate(180 9 9)"/><rect x="7.5" y="0" width="3" height="4" fill="#c8c8c8" transform="rotate(225 9 9)"/><rect x="7.5" y="0" width="3" height="4" fill="#c8c8c8" transform="rotate(270 9 9)"/><rect x="7.5" y="0" width="3" height="4" fill="#c8c8c8" transform="rotate(315 9 9)"/></svg>
<svg class="a" style="left:1527.5px;top:1009.5px;" width="9" height="5" viewBox="0 0 9 5"><path d="M0 0H9L4.5 5Z" fill="#f0f0f0"/></svg>
<svg class="a" style="left:1548px;top:1003px;" width="20" height="20" viewBox="0 0 20 20"><path d="M10 1V19M1 10H19" stroke="#d8d8d8" stroke-width="2"/></svg>
<svg class="a" style="left:1586px;top:1002px;" width="10" height="22" viewBox="0 0 10 22"><rect x="1" y="1" width="8" height="20" fill="#b8b8b8"/><path d="M5 4H9M6 8H9M5 12H9M6 16H9" stroke="#777"/></svg>
<div class="t" style="left:1612px;top:1005.9px;font-size:15px;color:#f0f0f0;">Decimal</div>
<svg class="a" style="left:1682.5px;top:1009.5px;" width="9" height="5" viewBox="0 0 9 5"><path d="M0 0H9L4.5 5Z" fill="#f0f0f0"/></svg>
<svg class="a" style="left:1706px;top:1005px;" width="13" height="16" viewBox="0 0 13 16"><rect x=".5" y=".5" width="12" height="15" fill="none" stroke="#b8b8b8"/><path d="M3 4H10M3 8H10M3 12H10M6.5 4V14" stroke="#b8b8b8"/></svg>
<svg class="a" style="left:1735px;top:1002px;" width="24" height="22" viewBox="0 0 24 22"><rect x="1" y="1" width="19" height="15" fill="none" stroke="#c8c8c8" stroke-width="1.6"/><path d="M1 4H20" stroke="#c8c8c8" stroke-width="1.6"/><rect x="9" y="12" width="8" height="8" fill="#c8c8c8"/><path d="M15 12V9C15 6 21 6 21 9" stroke="#c8c8c8" stroke-width="1.6" fill="none"/></svg>
<svg class="a" style="left:1765.5px;top:1009.5px;" width="9" height="5" viewBox="0 0 9 5"><path d="M0 0H9L4.5 5Z" fill="#f0f0f0"/></svg>
<svg class="a" style="left:1785px;top:1002px;" width="22" height="22" viewBox="0 0 22 22"><rect x="1" y="1" width="8" height="8" fill="none" stroke="#c8c8c8" stroke-width="1.4"/><circle cx="16" cy="8" r="4.5" fill="none" stroke="#c8c8c8" stroke-width="1.4"/><path d="M8 21L12 13L16 21Z" fill="none" stroke="#c8c8c8" stroke-width="1.4"/></svg>
<svg class="a" style="left:1818px;top:1002px;" width="22" height="22" viewBox="0 0 22 22"><circle cx="11" cy="11" r="9.5" fill="none" stroke="#a8a8a8" stroke-width="1.6"/><path d="M7 8L13 14" stroke="#a8a8a8" stroke-width="2"/></svg>
<svg class="a" style="left:1858px;top:1003px;" width="22" height="20" viewBox="0 0 22 20"><rect x="1" y="1" width="20" height="17" fill="none" stroke="#c8c8c8" stroke-width="1.6"/><path d="M5 14L17 5M17 5H12M17 5V10M5 14V9M5 14H10" stroke="#c8c8c8" stroke-width="1.6" fill="none"/></svg>
<svg class="a" style="left:1889px;top:1004px;" width="21" height="18" viewBox="0 0 21 18"><rect x="0" y="1" width="21" height="3" fill="#e0e0e0"/><rect x="0" y="7.5" width="21" height="3" fill="#e0e0e0"/><rect x="0" y="14" width="21" height="3" fill="#e0e0e0"/></svg>
<div class="a" style="left:0px;top:1030px;width:1910px;height:8px;background:#000"></div>
<div class="a" style="left:695px;top:1030px;width:60px;height:8px;background:#3a3a3a"></div>
</body></html>
